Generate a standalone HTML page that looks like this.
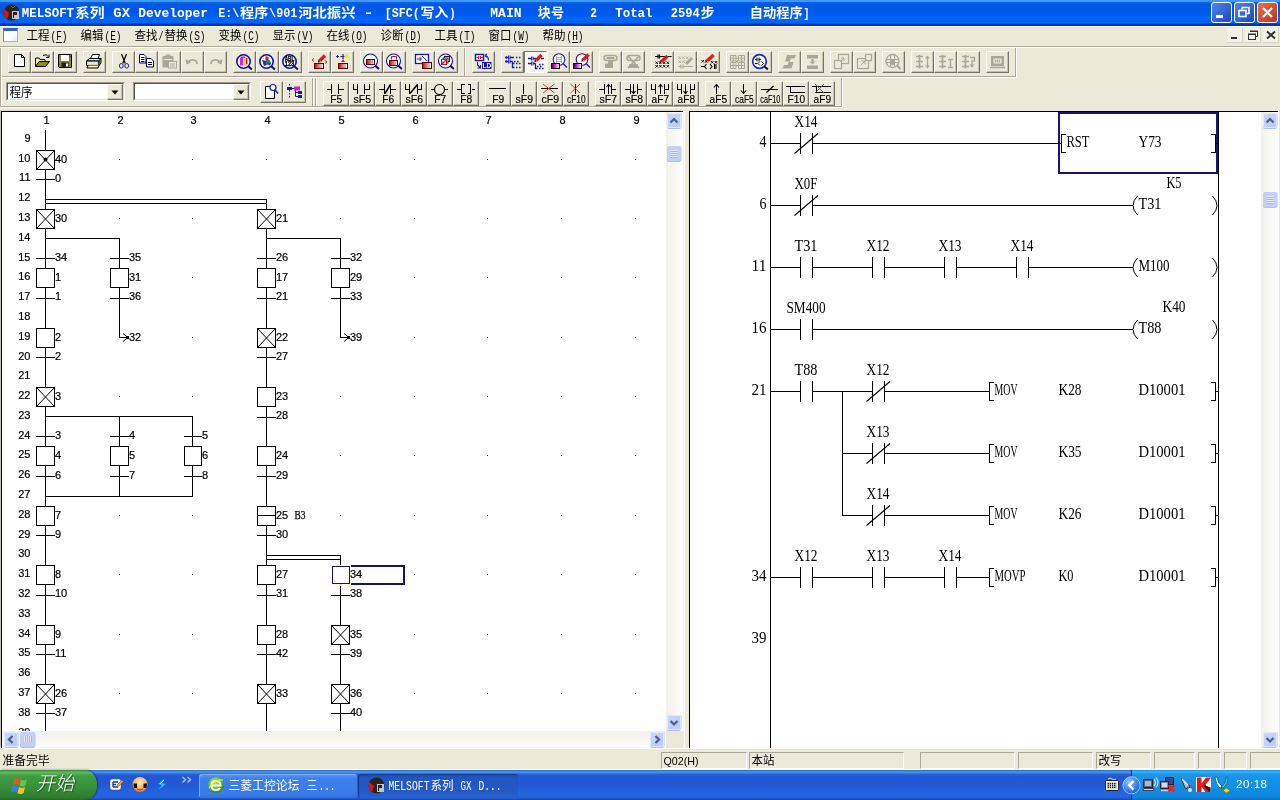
<!DOCTYPE html><html><head><meta charset="utf-8"><title>MELSOFT GX Developer</title><style>html,body{margin:0;padding:0}body{width:1280px;height:800px;position:relative;overflow:hidden;background:#ECE9D8;font-family:"Liberation Sans","Noto Sans CJK SC",sans-serif}svg{overflow:hidden;display:block}body>svg,body>div{will-change:transform}text{white-space:pre}</style></head><body><div style="position:absolute;left:0px;top:0px;width:1280px;height:26px;background:linear-gradient(to bottom,#3d98ff 0,#3d98ff 1.6px,#0b63e0 2.4px,#0456e2 5px,#0057e8 8px,#005aec 15px,#0066fa 18px,#0065f4 22.5px,#0048cc 23.5px,#0036b4 24.5px,#0036b4 26px)"></div><svg width="900" height="26" viewBox="0 0 900 26" style="position:absolute;left:0px;top:0px" ><text x="21.8" y="17" font-family='"Liberation Mono","DejaVu Sans Mono",monospace' font-size="13.5" font-weight="bold" fill="#fff" textLength="52.3" lengthAdjust="spacingAndGlyphs">MELSOFT</text><text x="74.9" y="17" font-family='"Liberation Sans","Noto Sans CJK SC",sans-serif' font-size="13" font-weight="bold" fill="#fff" textLength="29.6" lengthAdjust="spacingAndGlyphs">系列</text><text x="113.3" y="17" font-family='"Liberation Mono","DejaVu Sans Mono",monospace' font-size="13.5" font-weight="bold" fill="#fff" textLength="16.7" lengthAdjust="spacingAndGlyphs">GX</text><text x="138.3" y="17" font-family='"Liberation Mono","DejaVu Sans Mono",monospace' font-size="13.5" font-weight="bold" fill="#fff" textLength="69.7" lengthAdjust="spacingAndGlyphs">Developer</text><text x="218.3" y="17" font-family='"Liberation Mono","DejaVu Sans Mono",monospace' font-size="13.5" font-weight="bold" fill="#fff" textLength="21.0" lengthAdjust="spacingAndGlyphs">E:\</text><text x="240.1" y="17" font-family='"Liberation Sans","Noto Sans CJK SC",sans-serif' font-size="13" font-weight="bold" fill="#fff" textLength="28.3" lengthAdjust="spacingAndGlyphs">程序</text><text x="269.1" y="17" font-family='"Liberation Mono","DejaVu Sans Mono",monospace' font-size="13.5" font-weight="bold" fill="#fff" textLength="28.3" lengthAdjust="spacingAndGlyphs">\901</text><text x="298.2" y="17" font-family='"Liberation Sans","Noto Sans CJK SC",sans-serif' font-size="13" font-weight="bold" fill="#fff" textLength="57.3" lengthAdjust="spacingAndGlyphs">河北振兴</text><text x="363.3" y="17" font-family='"Liberation Mono","DejaVu Sans Mono",monospace' font-size="13.5" font-weight="bold" fill="#fff" textLength="10.7" lengthAdjust="spacingAndGlyphs">-</text><text x="384.8" y="17" font-family='"Liberation Mono","DejaVu Sans Mono",monospace' font-size="13.5" font-weight="bold" fill="#fff" textLength="35.0" lengthAdjust="spacingAndGlyphs">[SFC(</text><text x="420.6" y="17" font-family='"Liberation Sans","Noto Sans CJK SC",sans-serif' font-size="13" font-weight="bold" fill="#fff" textLength="27.8" lengthAdjust="spacingAndGlyphs">写入</text><text x="449.2" y="17" font-family='"Liberation Mono","DejaVu Sans Mono",monospace' font-size="13.5" font-weight="bold" fill="#fff" textLength="6.4" lengthAdjust="spacingAndGlyphs">)</text><text x="490.3" y="17" font-family='"Liberation Mono","DejaVu Sans Mono",monospace' font-size="13.5" font-weight="bold" fill="#fff" textLength="31.2" lengthAdjust="spacingAndGlyphs">MAIN</text><text x="537.8" y="17" font-family='"Liberation Sans","Noto Sans CJK SC",sans-serif' font-size="13" font-weight="bold" fill="#fff" textLength="26.2" lengthAdjust="spacingAndGlyphs">块号</text><text x="590.3" y="17" font-family='"Liberation Mono","DejaVu Sans Mono",monospace' font-size="13.5" font-weight="bold" fill="#fff" textLength="6.7" lengthAdjust="spacingAndGlyphs">2</text><text x="615.3" y="17" font-family='"Liberation Mono","DejaVu Sans Mono",monospace' font-size="13.5" font-weight="bold" fill="#fff" textLength="37.2" lengthAdjust="spacingAndGlyphs">Total</text><text x="670.8" y="17" font-family='"Liberation Mono","DejaVu Sans Mono",monospace' font-size="13.5" font-weight="bold" fill="#fff" textLength="28.9" lengthAdjust="spacingAndGlyphs">2594</text><text x="700.5" y="17" font-family='"Liberation Sans","Noto Sans CJK SC",sans-serif' font-size="13" font-weight="bold" fill="#fff" textLength="14.0" lengthAdjust="spacingAndGlyphs">步</text><text x="749.8" y="17" font-family='"Liberation Sans","Noto Sans CJK SC",sans-serif' font-size="13" font-weight="bold" fill="#fff" textLength="53.0" lengthAdjust="spacingAndGlyphs">自动程序</text><text x="803.6" y="17" font-family='"Liberation Mono","DejaVu Sans Mono",monospace' font-size="13.5" font-weight="bold" fill="#fff" textLength="5.9" lengthAdjust="spacingAndGlyphs">]</text></svg><svg width="17" height="17" viewBox="0 0 17 17" style="position:absolute;left:3px;top:4px" ><circle cx="8.5" cy="8.5" r="8" fill="#2a2322"/><path d="M1.5 5a8 8 0 0 0 2.5 10.5L6 9z" fill="#d01818"/><rect x="9" y="7" width="7" height="8" fill="#c9c4c0"/><path d="M10 8h4v3h-3v3h-1z" fill="#222"/><path d="M8 2l2 2 2-2" stroke="#3a8a3a" fill="none"/></svg><div style="position:absolute;left:1211px;top:2px;width:21px;height:21px;box-sizing:border-box;border:1px solid #fff;border-radius:3px;background:linear-gradient(135deg,#4f86ee,#1a48c0)"><svg width="19" height="19" viewBox="0 0 19 19" style="position:absolute;left:0;top:0"><rect x="4" y="12" width="7" height="3" fill="#fff"/></svg></div><div style="position:absolute;left:1234px;top:2px;width:21px;height:21px;box-sizing:border-box;border:1px solid #fff;border-radius:3px;background:linear-gradient(135deg,#4f86ee,#1a48c0)"><svg width="19" height="19" viewBox="0 0 19 19" style="position:absolute;left:0;top:0"><path d="M7 4.5h7v6h-2M7 4.5v2" stroke="#fff" stroke-width="1.6" fill="none"/><rect x="4" y="7.5" width="7" height="6" stroke="#fff" stroke-width="1.6" fill="none"/></svg></div><div style="position:absolute;left:1257px;top:2px;width:21px;height:21px;box-sizing:border-box;border:1px solid #fff;border-radius:3px;background:linear-gradient(135deg,#e8714f,#c03214)"><svg width="19" height="19" viewBox="0 0 19 19" style="position:absolute;left:0;top:0"><path d="M5 5l9 9M14 5l-9 9" stroke="#fff" stroke-width="2.2"/></svg></div><div style="position:absolute;left:0px;top:26px;width:1280px;height:20px;background:#ECE9D8"></div><div style="position:absolute;left:0px;top:26px;width:1280px;height:1px;background:#fbfbff"></div><div style="position:absolute;left:0px;top:46px;width:1280px;height:1px;background:#ACA899"></div><div style="position:absolute;left:0px;top:47px;width:1280px;height:1px;background:#fff"></div><div style="position:absolute;left:3px;top:28px;width:15px;height:14px;box-sizing:border-box;border:1px solid;border-color:#2f63c8 #9db4dc #9db4dc #5a82d0;border-top:3px solid #2f63c8;background:linear-gradient(135deg,#fff 55%,#e4ecfa)"></div><svg width="700" height="20" style="position:absolute;left:0px;top:26px" viewBox="0 26 700 20"><text x="26.5" y="40" font-family='"Liberation Sans","Noto Sans CJK SC",sans-serif' font-size="12" font-weight="normal" fill="#000" textLength="23.0" lengthAdjust="spacingAndGlyphs" >工程</text><text x="50.5" y="40" font-family='"Liberation Mono","DejaVu Sans Mono",monospace' font-size="12" font-weight="normal" fill="#000" textLength="17.0" lengthAdjust="spacingAndGlyphs" >(F)</text><rect x="56" y="42" width="6" height="1" fill="#000"/><text x="80.5" y="40" font-family='"Liberation Sans","Noto Sans CJK SC",sans-serif' font-size="12" font-weight="normal" fill="#000" textLength="23.0" lengthAdjust="spacingAndGlyphs" >编辑</text><text x="104.5" y="40" font-family='"Liberation Mono","DejaVu Sans Mono",monospace' font-size="12" font-weight="normal" fill="#000" textLength="17.0" lengthAdjust="spacingAndGlyphs" >(E)</text><rect x="110" y="42" width="6" height="1" fill="#000"/><text x="134.5" y="40" font-family='"Liberation Sans","Noto Sans CJK SC",sans-serif' font-size="12" font-weight="normal" fill="#000" textLength="23.0" lengthAdjust="spacingAndGlyphs" >查找</text><text x="158.5" y="40" font-family='"Liberation Mono","DejaVu Sans Mono",monospace' font-size="12" font-weight="normal" fill="#000" textLength="5.0" lengthAdjust="spacingAndGlyphs" >/</text><text x="164.5" y="40" font-family='"Liberation Sans","Noto Sans CJK SC",sans-serif' font-size="12" font-weight="normal" fill="#000" textLength="23.0" lengthAdjust="spacingAndGlyphs" >替换</text><text x="188.5" y="40" font-family='"Liberation Mono","DejaVu Sans Mono",monospace' font-size="12" font-weight="normal" fill="#000" textLength="17.0" lengthAdjust="spacingAndGlyphs" >(S)</text><rect x="194" y="42" width="6" height="1" fill="#000"/><text x="218.5" y="40" font-family='"Liberation Sans","Noto Sans CJK SC",sans-serif' font-size="12" font-weight="normal" fill="#000" textLength="23.0" lengthAdjust="spacingAndGlyphs" >变换</text><text x="242.5" y="40" font-family='"Liberation Mono","DejaVu Sans Mono",monospace' font-size="12" font-weight="normal" fill="#000" textLength="17.0" lengthAdjust="spacingAndGlyphs" >(C)</text><rect x="248" y="42" width="6" height="1" fill="#000"/><text x="272.5" y="40" font-family='"Liberation Sans","Noto Sans CJK SC",sans-serif' font-size="12" font-weight="normal" fill="#000" textLength="23.0" lengthAdjust="spacingAndGlyphs" >显示</text><text x="296.5" y="40" font-family='"Liberation Mono","DejaVu Sans Mono",monospace' font-size="12" font-weight="normal" fill="#000" textLength="17.0" lengthAdjust="spacingAndGlyphs" >(V)</text><rect x="302" y="42" width="6" height="1" fill="#000"/><text x="326.5" y="40" font-family='"Liberation Sans","Noto Sans CJK SC",sans-serif' font-size="12" font-weight="normal" fill="#000" textLength="23.0" lengthAdjust="spacingAndGlyphs" >在线</text><text x="350.5" y="40" font-family='"Liberation Mono","DejaVu Sans Mono",monospace' font-size="12" font-weight="normal" fill="#000" textLength="17.0" lengthAdjust="spacingAndGlyphs" >(O)</text><rect x="356" y="42" width="6" height="1" fill="#000"/><text x="380.5" y="40" font-family='"Liberation Sans","Noto Sans CJK SC",sans-serif' font-size="12" font-weight="normal" fill="#000" textLength="23.0" lengthAdjust="spacingAndGlyphs" >诊断</text><text x="404.5" y="40" font-family='"Liberation Mono","DejaVu Sans Mono",monospace' font-size="12" font-weight="normal" fill="#000" textLength="17.0" lengthAdjust="spacingAndGlyphs" >(D)</text><rect x="410" y="42" width="6" height="1" fill="#000"/><text x="434.5" y="40" font-family='"Liberation Sans","Noto Sans CJK SC",sans-serif' font-size="12" font-weight="normal" fill="#000" textLength="23.0" lengthAdjust="spacingAndGlyphs" >工具</text><text x="458.5" y="40" font-family='"Liberation Mono","DejaVu Sans Mono",monospace' font-size="12" font-weight="normal" fill="#000" textLength="17.0" lengthAdjust="spacingAndGlyphs" >(T)</text><rect x="464" y="42" width="6" height="1" fill="#000"/><text x="488.5" y="40" font-family='"Liberation Sans","Noto Sans CJK SC",sans-serif' font-size="12" font-weight="normal" fill="#000" textLength="23.0" lengthAdjust="spacingAndGlyphs" >窗口</text><text x="512.5" y="40" font-family='"Liberation Mono","DejaVu Sans Mono",monospace' font-size="12" font-weight="normal" fill="#000" textLength="17.0" lengthAdjust="spacingAndGlyphs" >(W)</text><rect x="518" y="42" width="6" height="1" fill="#000"/><text x="542.5" y="40" font-family='"Liberation Sans","Noto Sans CJK SC",sans-serif' font-size="12" font-weight="normal" fill="#000" textLength="23.0" lengthAdjust="spacingAndGlyphs" >帮助</text><text x="566.5" y="40" font-family='"Liberation Mono","DejaVu Sans Mono",monospace' font-size="12" font-weight="normal" fill="#000" textLength="17.0" lengthAdjust="spacingAndGlyphs" >(H)</text><rect x="572" y="42" width="6" height="1" fill="#000"/></svg><div style="position:absolute;left:1227px;top:28px;width:16px;height:15px;background:#f3f1e8;box-sizing:border-box;border-right:1px solid #d8d4c4;border-bottom:1px solid #d8d4c4"><svg width="16" height="15" style="position:absolute;left:0;top:0"><rect x="4" y="9" width="6" height="2" fill="#333"/></svg></div><div style="position:absolute;left:1245px;top:28px;width:16px;height:15px;background:#f3f1e8;box-sizing:border-box;border-right:1px solid #d8d4c4;border-bottom:1px solid #d8d4c4"><svg width="16" height="15" style="position:absolute;left:0;top:0"><path d="M5.5 3.5h7v5h-2" stroke="#333" stroke-width="1" fill="none"/><rect x="5" y="2.5" width="8" height="1.5" fill="#333"/><rect x="3.5" y="6.5" width="7" height="5" stroke="#333" fill="none"/><rect x="3" y="5.5" width="8" height="1.5" fill="#333"/></svg></div><div style="position:absolute;left:1263px;top:28px;width:16px;height:15px;background:#f3f1e8;box-sizing:border-box;border-right:1px solid #d8d4c4;border-bottom:1px solid #d8d4c4"><svg width="16" height="15" style="position:absolute;left:0;top:0"><path d="M4 3.5l8 7M12 3.5l-8 7" stroke="#333" stroke-width="2"/></svg></div><div style="position:absolute;left:0px;top:48px;width:1280px;height:63px;background:#ECE9D8"></div><div style="position:absolute;left:0px;top:76px;width:1016px;height:1px;background:#ACA899"></div><div style="position:absolute;left:0px;top:77px;width:1017px;height:1px;background:#fff"></div><div style="position:absolute;left:0px;top:106px;width:842px;height:1px;background:#ACA899"></div><div style="position:absolute;left:0px;top:107px;width:843px;height:1px;background:#fff"></div><div style="position:absolute;left:0px;top:48px;width:1px;height:58px;background:#ACA899"></div><div style="position:absolute;left:1px;top:48px;width:1px;height:58px;background:#fff"></div><div style="position:absolute;left:464px;top:48px;width:1px;height:28px;background:#ACA899"></div><div style="position:absolute;left:465px;top:48px;width:1px;height:28px;background:#fff"></div><div style="position:absolute;left:1015px;top:48px;width:1px;height:29px;background:#ACA899"></div><div style="position:absolute;left:1016px;top:48px;width:1px;height:30px;background:#fff"></div><div style="position:absolute;left:312px;top:78px;width:1px;height:28px;background:#ACA899"></div><div style="position:absolute;left:313px;top:78px;width:1px;height:28px;background:#fff"></div><div style="position:absolute;left:315px;top:78px;width:1px;height:28px;background:#ACA899"></div><div style="position:absolute;left:316px;top:78px;width:1px;height:28px;background:#fff"></div><div style="position:absolute;left:841px;top:78px;width:1px;height:29px;background:#ACA899"></div><div style="position:absolute;left:842px;top:78px;width:1px;height:30px;background:#fff"></div><div style="position:absolute;left:8px;top:51px;width:23px;height:22px;box-sizing:border-box;border:1px solid;border-color:#fdfdf8 #76736a #76736a #fdfdf8;background:#ECE9D8;box-shadow:inset -1px -1px 0 #c4c1b2"><svg width="23" height="22" viewBox="0 0 23 22" style="position:absolute;left:-1px;top:-1px"><path d="M6.500 3.500h7l3 3v9h-10z" fill="#fff" stroke="#000"/><path d="M13.500 3.500v3h3" fill="none" stroke="#000"/></svg></div><div style="position:absolute;left:31px;top:51px;width:23px;height:22px;box-sizing:border-box;border:1px solid;border-color:#fdfdf8 #76736a #76736a #fdfdf8;background:#ECE9D8;box-shadow:inset -1px -1px 0 #c4c1b2"><svg width="23" height="22" viewBox="0 0 23 22" style="position:absolute;left:-1px;top:-1px"><path d="M4.500 15.500v-8.500h3.500l1 1.500h5v2" fill="#f6f28c" stroke="#000"/><path d="M4.500 15.500l3.500-5h10.500l-4 5z" fill="#8c8c22" stroke="#000"/><path d="M12 4.500q3.500-2.200 5.500 1.300" fill="none" stroke="#000"/><path d="M18 3.500v3h-3" fill="none" stroke="#000"/></svg></div><div style="position:absolute;left:54px;top:51px;width:23px;height:22px;box-sizing:border-box;border:1px solid;border-color:#fdfdf8 #76736a #76736a #fdfdf8;background:#ECE9D8;box-shadow:inset -1px -1px 0 #c4c1b2"><svg width="23" height="22" viewBox="0 0 23 22" style="position:absolute;left:-1px;top:-1px"><path d="M4.500 3.500h13v13h-12l-1-1z" fill="#86863c" stroke="#000"/><rect x="7" y="4" width="8" height="6" fill="#fff"/><rect x="7.500" y="11.500" width="7" height="5" fill="#222"/><rect x="12" y="12.500" width="2" height="3" fill="#fff"/><rect x="15.500" y="4.500" width="1" height="2" fill="#222"/></svg></div><div style="position:absolute;left:83px;top:51px;width:23px;height:22px;box-sizing:border-box;border:1px solid;border-color:#fdfdf8 #76736a #76736a #fdfdf8;background:#ECE9D8;box-shadow:inset -1px -1px 0 #c4c1b2"><svg width="23" height="22" viewBox="0 0 23 22" style="position:absolute;left:-1px;top:-1px"><path d="M7.500 7.500l2-4h7l-1.500 4z" fill="#fff" stroke="#000"/><path d="M3.500 10l3-2.500h11.500l-2 2.500z" fill="#e8e6da" stroke="#000"/><path d="M3.500 10h12.500v4.500h-12.500z" fill="#d4d1c2" stroke="#000"/><path d="M16 10l2-2.500v4.500l-2 2.500z" fill="#a8a596" stroke="#000"/><path d="M5 14.500l-1 2.500h11l1-2.500" fill="#f6f2a0" stroke="#000"/><path d="M5 12h9" stroke="#fff"/><circle cx="17" cy="10" r=".8" fill="#0a0"/></svg></div><div style="position:absolute;left:112px;top:51px;width:23px;height:22px;box-sizing:border-box;border:1px solid;border-color:#fdfdf8 #76736a #76736a #fdfdf8;background:#ECE9D8;box-shadow:inset -1px -1px 0 #c4c1b2"><svg width="23" height="22" viewBox="0 0 23 22" style="position:absolute;left:-1px;top:-1px"><path d="M9.500 3l3.800 9.500M14.500 3l-3.800 9.500" stroke="#000" stroke-width="1.200" fill="none"/><ellipse cx="9.300" cy="14.800" rx="1.900" ry="2.300" fill="none" stroke="#1a1a90" stroke-width="1"/><ellipse cx="14.700" cy="14.800" rx="1.900" ry="2.300" fill="none" stroke="#1a1a90" stroke-width="1"/></svg></div><div style="position:absolute;left:135px;top:51px;width:23px;height:22px;box-sizing:border-box;border:1px solid;border-color:#fdfdf8 #76736a #76736a #fdfdf8;background:#ECE9D8;box-shadow:inset -1px -1px 0 #c4c1b2"><svg width="23" height="22" viewBox="0 0 23 22" style="position:absolute;left:-1px;top:-1px"><path d="M4.500 3.500h4.500l2 2v6.500h-6.500z" fill="#fff" stroke="#000060"/><path d="M6 6.500h3.500M6 8.500h3.500M6 10.500h3.500" stroke="#000"/><path d="M11.500 7.500h4.500l2.500 2.500v6h-7z" fill="#fff" stroke="#000060"/><path d="M13 11.500h4M13 13.500h4" stroke="#000"/></svg></div><div style="position:absolute;left:158px;top:51px;width:23px;height:22px;box-sizing:border-box;border:1px solid;border-color:#fdfdf8 #76736a #76736a #fdfdf8;background:#ECE9D8;box-shadow:inset -1px -1px 0 #c4c1b2"><svg width="23" height="22" viewBox="0 0 23 22" style="position:absolute;left:-1px;top:-1px"><rect x="4.500" y="5" width="11" height="11.500" rx="1" fill="#aaa798"/><rect x="7.500" y="3.500" width="5" height="3" rx="1" fill="#aaa798"/><rect x="10.500" y="10.500" width="8" height="6.500" fill="#ECE9D8" stroke="#aaa798"/><path d="M12 13h5M12 15h5" stroke="#aaa798"/><path d="M6 8.500h8" stroke="#ECE9D8"/></svg></div><div style="position:absolute;left:181px;top:51px;width:23px;height:22px;box-sizing:border-box;border:1px solid;border-color:#fdfdf8 #76736a #76736a #fdfdf8;background:#ECE9D8;box-shadow:inset -1px -1px 0 #c4c1b2"><svg width="23" height="22" viewBox="0 0 23 22" style="position:absolute;left:-1px;top:-1px"><path d="M7 12.500q1-4 5.500-3.500q3.500 .6 3.500 4" fill="none" stroke="#aaa798" stroke-width="1.700"/><path d="M4.500 8l1 5.500 4.500-2z" fill="#aaa798"/></svg></div><div style="position:absolute;left:204px;top:51px;width:23px;height:22px;box-sizing:border-box;border:1px solid;border-color:#fdfdf8 #76736a #76736a #fdfdf8;background:#ECE9D8;box-shadow:inset -1px -1px 0 #c4c1b2"><svg width="23" height="22" viewBox="0 0 23 22" style="position:absolute;left:-1px;top:-1px"><path d="M16 12.500q-1-4-5.500-3.500q-3.500 .6-3.500 4" fill="none" stroke="#aaa798" stroke-width="1.700"/><path d="M18.500 8l-1 5.500-4.500-2z" fill="#aaa798"/></svg></div><div style="position:absolute;left:233px;top:51px;width:23px;height:22px;box-sizing:border-box;border:1px solid;border-color:#fdfdf8 #76736a #76736a #fdfdf8;background:#ECE9D8;box-shadow:inset -1px -1px 0 #c4c1b2"><svg width="23" height="22" viewBox="0 0 23 22" style="position:absolute;left:-1px;top:-1px"><circle cx="10.5" cy="10.5" r="6.7" fill="#fff" stroke="#1010b4" stroke-width="1.6"/><path d="M7 6.500h3v8h-3z" fill="#e020e0"/><path d="M10 5.500h3v9.500h-3z" fill="#f4e020"/><path d="M13 7h1.500v6.500h-1.500z" fill="#d02020"/><path d="M8 5.500h4v1.500h-4z" fill="#8a40c0"/><path d="M15.3 15.3l3.600 3.200" stroke="#101060" stroke-width="2"/></svg></div><div style="position:absolute;left:256px;top:51px;width:23px;height:22px;box-sizing:border-box;border:1px solid;border-color:#fdfdf8 #76736a #76736a #fdfdf8;background:#ECE9D8;box-shadow:inset -1px -1px 0 #c4c1b2"><svg width="23" height="22" viewBox="0 0 23 22" style="position:absolute;left:-1px;top:-1px"><circle cx="10.5" cy="10.5" r="6.7" fill="#fff" stroke="#1010b4" stroke-width="1.6"/><path d="M9.500 5l3 1v3l-3 1z" fill="#e01818"/><path d="M6 9l4 1 1 4-3 1z" fill="#5020a0"/><path d="M10 9h3.500l1.500 3-3 2.500-2-2.500z" fill="#108080"/><path d="M12 12l3 0-1 3z" fill="#a01020"/><path d="M15.3 15.3l3.600 3.200" stroke="#101060" stroke-width="2"/></svg></div><div style="position:absolute;left:279px;top:51px;width:23px;height:22px;box-sizing:border-box;border:1px solid;border-color:#fdfdf8 #76736a #76736a #fdfdf8;background:#ECE9D8;box-shadow:inset -1px -1px 0 #c4c1b2"><svg width="23" height="22" viewBox="0 0 23 22" style="position:absolute;left:-1px;top:-1px"><circle cx="10.5" cy="10.5" r="6.7" fill="#fff" stroke="#1010b4" stroke-width="1.6"/><text x="10.500" y="10" font-size="6.500" font-family="Liberation Sans" font-weight="bold" stroke="#000" stroke-width=".3" text-anchor="middle" textLength="9.500" lengthAdjust="spacingAndGlyphs">ABL</text><text x="10.500" y="15.300" font-size="6.500" font-family="Liberation Sans" font-weight="bold" stroke="#000" stroke-width=".3" text-anchor="middle" textLength="9.500" lengthAdjust="spacingAndGlyphs">123</text><path d="M15.3 15.3l3.600 3.200" stroke="#101060" stroke-width="2"/></svg></div><div style="position:absolute;left:308px;top:51px;width:23px;height:22px;box-sizing:border-box;border:1px solid;border-color:#fdfdf8 #76736a #76736a #fdfdf8;background:#ECE9D8;box-shadow:inset -1px -1px 0 #c4c1b2"><svg width="23" height="22" viewBox="0 0 23 22" style="position:absolute;left:-1px;top:-1px"><path d="M11 10.5L17 4.5" stroke="#e01818" stroke-width="3.4" stroke-linecap="butt"/><path d="M9.8 11.7l2.400-.6-1.800-1.800z" fill="#111"/><path d="M11.8 10.3l1.200 1.200" stroke="#f0d060" stroke-width="1.2"/><defs><linearGradient id="pg612" x1="0" x2="1" y1="0" y2="0"><stop offset="0" stop-color="#b01010"/><stop offset=".3" stop-color="#e04848"/><stop offset=".6" stop-color="#f4c0c0"/><stop offset="1" stop-color="#fff"/></linearGradient></defs><rect x="6.5" y="12.5" width="9" height="5" fill="url(#pg612)" stroke="#600" stroke-width="1"/><path d="M10.95 13v4M13.02 13v4" stroke="#777" stroke-width=".7"/><path d="M6 7.500l-2 1.500 2 1.500M17 9.500l2 1.500-2 1.500" stroke="#c01010" fill="none" stroke-width=".9"/></svg></div><div style="position:absolute;left:331px;top:51px;width:23px;height:22px;box-sizing:border-box;border:1px solid;border-color:#fdfdf8 #76736a #76736a #fdfdf8;background:#ECE9D8;box-shadow:inset -1px -1px 0 #c4c1b2"><svg width="23" height="22" viewBox="0 0 23 22" style="position:absolute;left:-1px;top:-1px"><path d="M12 3v5M9.500 5.500h5" stroke="#1818c0" stroke-width="1.200"/><path d="M6.500 4v3M5 5.500h3" stroke="#1818c0" stroke-width=".9"/><path d="M15 3l3 2-2 3-3-2z" fill="#f8e820"/><path d="M10 11l2-3 2 3z" fill="#e01818"/><defs><linearGradient id="pg712" x1="0" x2="1" y1="0" y2="0"><stop offset="0" stop-color="#b01010"/><stop offset=".3" stop-color="#e04848"/><stop offset=".6" stop-color="#f4c0c0"/><stop offset="1" stop-color="#fff"/></linearGradient></defs><rect x="7.5" y="12.5" width="9" height="5" fill="url(#pg712)" stroke="#600" stroke-width="1"/><path d="M11.95 13v4M14.02 13v4" stroke="#777" stroke-width=".7"/></svg></div><div style="position:absolute;left:360px;top:51px;width:23px;height:22px;box-sizing:border-box;border:1px solid;border-color:#fdfdf8 #76736a #76736a #fdfdf8;background:#ECE9D8;box-shadow:inset -1px -1px 0 #c4c1b2"><svg width="23" height="22" viewBox="0 0 23 22" style="position:absolute;left:-1px;top:-1px"><circle cx="10.5" cy="10" r="7" fill="#fff" stroke="#1010b4" stroke-width="1.1"/><defs><linearGradient id="pg68" x1="0" x2="1" y1="0" y2="0"><stop offset="0" stop-color="#b01010"/><stop offset=".3" stop-color="#e04848"/><stop offset=".6" stop-color="#f4c0c0"/><stop offset="1" stop-color="#fff"/></linearGradient></defs><rect x="6.5" y="8.5" width="8" height="5" fill="url(#pg68)" stroke="#600" stroke-width="1"/><path d="M10.4 9v4M12.24 9v4" stroke="#777" stroke-width=".7"/><path d="M15.3 14.8l3.600 3.200" stroke="#101060" stroke-width="2"/></svg></div><div style="position:absolute;left:383px;top:51px;width:23px;height:22px;box-sizing:border-box;border:1px solid;border-color:#fdfdf8 #76736a #76736a #fdfdf8;background:#ECE9D8;box-shadow:inset -1px -1px 0 #c4c1b2"><svg width="23" height="22" viewBox="0 0 23 22" style="position:absolute;left:-1px;top:-1px"><circle cx="10.5" cy="10" r="7" fill="#fff" stroke="#1010b4" stroke-width="1.1"/><defs><linearGradient id="pg69" x1="0" x2="1" y1="0" y2="0"><stop offset="0" stop-color="#b01010"/><stop offset=".3" stop-color="#e04848"/><stop offset=".6" stop-color="#f4c0c0"/><stop offset="1" stop-color="#fff"/></linearGradient></defs><rect x="6.5" y="9.5" width="8" height="5" fill="url(#pg69)" stroke="#600" stroke-width="1"/><path d="M10.4 10v4M12.24 10v4" stroke="#777" stroke-width=".7"/><path d="M8.500 8.500v-3h5v3" fill="#fff" stroke="#c01010"/><path d="M15.3 14.8l3.600 3.200" stroke="#101060" stroke-width="2"/></svg></div><div style="position:absolute;left:412px;top:51px;width:23px;height:22px;box-sizing:border-box;border:1px solid;border-color:#fdfdf8 #76736a #76736a #fdfdf8;background:#ECE9D8;box-shadow:inset -1px -1px 0 #c4c1b2"><svg width="23" height="22" viewBox="0 0 23 22" style="position:absolute;left:-1px;top:-1px"><rect x="3.500" y="3.500" width="13" height="9" fill="#fff" stroke="#1818a8" stroke-width="1.300"/><path d="M5 8h4M7.500 6l2 2-2 2M10 5l5 5" stroke="#1818a8" fill="none"/><defs><linearGradient id="pg1011" x1="0" x2="1" y1="0" y2="0"><stop offset="0" stop-color="#b01010"/><stop offset=".3" stop-color="#e04848"/><stop offset=".6" stop-color="#f4c0c0"/><stop offset="1" stop-color="#fff"/></linearGradient></defs><rect x="10.5" y="11.5" width="9" height="6" fill="url(#pg1011)" stroke="#600" stroke-width="1"/><path d="M14.95 12v5M17.02 12v5" stroke="#777" stroke-width=".7"/></svg></div><div style="position:absolute;left:435px;top:51px;width:23px;height:22px;box-sizing:border-box;border:1px solid;border-color:#fdfdf8 #76736a #76736a #fdfdf8;background:#ECE9D8;box-shadow:inset -1px -1px 0 #c4c1b2"><svg width="23" height="22" viewBox="0 0 23 22" style="position:absolute;left:-1px;top:-1px"><circle cx="10.5" cy="10" r="7" fill="#fff" stroke="#1010b4" stroke-width="1.1"/><rect x="9.500" y="5.500" width="5" height="5" fill="#fff" stroke="#222"/><rect x="8" y="7" width="5" height="5" fill="#fff" stroke="#222"/><rect x="6.500" y="8.500" width="5" height="5" fill="#fff" stroke="#c01010"/><path d="M7 13l4-4M7.500 10.500l1.500 2" stroke="#d02020" stroke-width="1.100" fill="none"/><path d="M15.3 14.8l3.600 3.200" stroke="#101060" stroke-width="2"/></svg></div><div style="position:absolute;left:472px;top:51px;width:23px;height:22px;box-sizing:border-box;border:1px solid;border-color:#fdfdf8 #76736a #76736a #fdfdf8;background:#ECE9D8;box-shadow:inset -1px -1px 0 #c4c1b2"><svg width="23" height="22" viewBox="0 0 23 22" style="position:absolute;left:-1px;top:-1px"><rect x="3.500" y="3.500" width="8" height="6" fill="#fff" stroke="#1818a8" stroke-width="1.400"/><path d="M4.500 6.500h2M8.500 6.500h2.500M6.500 5v3M8.500 5v3" stroke="#d02020" stroke-width="1.200"/><path d="M13 4.500q3.500 .5 3.500 5M13 4.500l1.800 1.800M13 4.500l1.800-1.500" stroke="#1818a8" fill="none" stroke-width="1.100"/><path d="M5.500 11v3l3 3M8.500 14v3h-3" stroke="#1818a8" fill="none" stroke-width="1.100"/><rect x="10" y="11" width="9.500" height="7" fill="#1010a0"/><text x="14.800" y="17" font-size="6.500" font-weight="bold" font-family="Liberation Sans" fill="#fff" text-anchor="middle">LD</text></svg></div><div style="position:absolute;left:501px;top:51px;width:23px;height:22px;box-sizing:border-box;border:1px solid;border-color:#fdfdf8 #76736a #76736a #fdfdf8;background:#ECE9D8;box-shadow:inset -1px -1px 0 #c4c1b2"><svg width="23" height="22" viewBox="0 0 23 22" style="position:absolute;left:-1px;top:-1px"><path d="M4 6.500h3M9 6.500h4M15 6.500h1.500M18 6.500h1.500M4 10.500h3M9 10.500h2.500M11.500 10.500v6h2M11.500 12.500h2M15 12.500h1.500M18 12.500h1.500M15 16.500h1.500M18 16.500h1.500M13 10.500h1.500M16 10.500h1.500" stroke="#1818a8" stroke-width="1.300" fill="none"/><path d="M6 5l-2 1.500 2 1.500zM6 9l-2 1.500 2 1.500z" fill="#1818a8"/><path d="M7.500 4.500v4M9 4.500v4M7.500 8.500v4M9 8.500v4" stroke="#1818a8" stroke-width=".9"/></svg></div><div style="position:absolute;left:524px;top:51px;width:23px;height:22px;box-sizing:border-box;border:1px solid;border-color:#76736a #fff #fff #76736a;background:#f8f7f1"><svg width="23" height="22" viewBox="0 0 23 22" style="position:absolute;left:-1px;top:-1px"><path d="M4 7.500h3M9 7.500h3M4 12.500h3M9 12.500h2.500M11.500 12.500v5h2M15 13.500h1.500M18 13.500h1.500M15 17.500h1.500M18 17.500h1.500M13 15.500h1.500M16 15.500h1.500M17 7.500h3" stroke="#1818a8" stroke-width="1.300" fill="none"/><path d="M7.500 5.500v4M9 5.500v4M7.500 10.500v4M9 10.500v4" stroke="#1818a8" stroke-width=".9"/><path d="M11.5 10L17.5 4" stroke="#e01818" stroke-width="3.4" stroke-linecap="butt"/><path d="M10.3 11.2l2.400-.6-1.800-1.800z" fill="#111"/><path d="M12.3 9.8l1.200 1.200" stroke="#f0d060" stroke-width="1.2"/></svg></div><div style="position:absolute;left:547px;top:51px;width:23px;height:22px;box-sizing:border-box;border:1px solid;border-color:#fdfdf8 #76736a #76736a #fdfdf8;background:#ECE9D8;box-shadow:inset -1px -1px 0 #c4c1b2"><svg width="23" height="22" viewBox="0 0 23 22" style="position:absolute;left:-1px;top:-1px"><circle cx="12" cy="8.500" r="5.800" fill="#fff" stroke="#1818a8" stroke-width="1.100"/><path d="M9.500 6.500h5M9.500 8.500h5M9.500 10.500h5M9.500 5v7M14.500 5v7" stroke="#888" stroke-width=".7" fill="none"/><path d="M16 12.500l4 4" stroke="#1818a8" stroke-width="1.300"/><defs><linearGradient id="mg412" x1="0" x2="1" y1="0" y2="0"><stop offset="0" stop-color="#400040"/><stop offset=".4" stop-color="#d020d0"/><stop offset="1" stop-color="#fff"/></linearGradient></defs><rect x="4.5" y="12.5" width="8" height="5" fill="url(#mg412)" stroke="#000" stroke-width="1"/></svg></div><div style="position:absolute;left:570px;top:51px;width:23px;height:22px;box-sizing:border-box;border:1px solid;border-color:#fdfdf8 #76736a #76736a #fdfdf8;background:#ECE9D8;box-shadow:inset -1px -1px 0 #c4c1b2"><svg width="23" height="22" viewBox="0 0 23 22" style="position:absolute;left:-1px;top:-1px"><circle cx="12" cy="8.500" r="5.800" fill="#fff" stroke="#1818a8" stroke-width="1.100"/><path d="M16 12.500l4 4" stroke="#1818a8" stroke-width="1.300"/><path d="M12.5 9.5L18.5 3.5" stroke="#e01818" stroke-width="3.4" stroke-linecap="butt"/><path d="M11.3 10.7l2.400-.6-1.800-1.800z" fill="#111"/><path d="M13.3 9.3l1.200 1.200" stroke="#f0d060" stroke-width="1.2"/><defs><linearGradient id="mg312" x1="0" x2="1" y1="0" y2="0"><stop offset="0" stop-color="#400040"/><stop offset=".4" stop-color="#d020d0"/><stop offset="1" stop-color="#fff"/></linearGradient></defs><rect x="3.5" y="12.5" width="8" height="5" fill="url(#mg312)" stroke="#000" stroke-width="1"/></svg></div><div style="position:absolute;left:599px;top:51px;width:23px;height:22px;box-sizing:border-box;border:1px solid;border-color:#fdfdf8 #76736a #76736a #fdfdf8;background:#ECE9D8;box-shadow:inset -1px -1px 0 #c4c1b2"><svg width="23" height="22" viewBox="0 0 23 22" style="position:absolute;left:-1px;top:-1px"><rect x="5" y="4.500" width="13" height="5" rx="2.500" fill="none" stroke="#aaa798" stroke-width="1.500"/><rect x="7.500" y="6" width="8" height="2" fill="#aaa798"/><rect x="9" y="9" width="5" height="8" fill="#aaa798"/><rect x="6" y="12.500" width="5" height="4.500" fill="#aaa798"/></svg></div><div style="position:absolute;left:622px;top:51px;width:23px;height:22px;box-sizing:border-box;border:1px solid;border-color:#fdfdf8 #76736a #76736a #fdfdf8;background:#ECE9D8;box-shadow:inset -1px -1px 0 #c4c1b2"><svg width="23" height="22" viewBox="0 0 23 22" style="position:absolute;left:-1px;top:-1px"><rect x="5" y="4.500" width="13" height="5" rx="2.500" fill="none" stroke="#aaa798" stroke-width="1.500"/><path d="M6 5l11 12M17 5l-11 12" stroke="#aaa798" stroke-width="1.600"/><rect x="7" y="13" width="9" height="4" fill="#aaa798"/></svg></div><div style="position:absolute;left:651px;top:51px;width:23px;height:22px;box-sizing:border-box;border:1px solid;border-color:#fdfdf8 #76736a #76736a #fdfdf8;background:#ECE9D8;box-shadow:inset -1px -1px 0 #c4c1b2"><svg width="23" height="22" viewBox="0 0 23 22" style="position:absolute;left:-1px;top:-1px"><path d="M4 5.500h3M8.500 5.500h12M7 3.500v4M8.500 3.500v4" stroke="#000" stroke-width="1.200"/><path d="M4.5 10.5l2.500 2.500M7.0 10.5l-2.500 2.500M8.2 10.5l2.500 2.500M10.7 10.5l-2.500 2.500M11.9 10.5l2.500 2.500M14.4 10.5l-2.500 2.500M15.600000000000001 10.5l2.500 2.500M18.1 10.5l-2.500 2.500" stroke="#000" stroke-width="0.9" fill="none"/><path d="M4.5 14l2.500 2.500M7.0 14l-2.500 2.500M8.2 14l2.500 2.500M10.7 14l-2.500 2.500M11.9 14l2.500 2.500M14.4 14l-2.500 2.500M15.600000000000001 14l2.500 2.500M18.1 14l-2.500 2.500" stroke="#000" stroke-width="0.9" fill="none"/><path d="M9.5 11.5L16.5 5" stroke="#e01818" stroke-width="3.4" stroke-linecap="butt"/><path d="M8.3 12.7l2.400-.6-1.800-1.800z" fill="#111"/><path d="M10.3 11.3l1.200 1.200" stroke="#f0d060" stroke-width="1.2"/></svg></div><div style="position:absolute;left:674px;top:51px;width:23px;height:22px;box-sizing:border-box;border:1px solid;border-color:#fdfdf8 #76736a #76736a #fdfdf8;background:#ECE9D8;box-shadow:inset -1px -1px 0 #c4c1b2"><svg width="23" height="22" viewBox="0 0 23 22" style="position:absolute;left:-1px;top:-1px"><path d="M4 15.500h3M9 15.500h10M7 13.500v4M9 13.500v4" stroke="#aaa798" stroke-width="1.100"/><path d="M4.5 5.5l2.500 2.500M7.0 5.5l-2.500 2.500M8.2 5.5l2.500 2.500M10.7 5.5l-2.500 2.500M11.9 5.5l2.500 2.500M14.4 5.5l-2.500 2.500" stroke="#aaa798" stroke-width="0.9" fill="none"/><path d="M4.5 9.5l2.500 2.500M7.0 9.5l-2.500 2.500M8.2 9.5l2.500 2.500M10.7 9.5l-2.500 2.500M11.9 9.5l2.500 2.500M14.4 9.5l-2.500 2.500" stroke="#aaa798" stroke-width="0.9" fill="none"/><path d="M11 12l6-6 2 2-6 6z" fill="#aaa798"/></svg></div><div style="position:absolute;left:697px;top:51px;width:23px;height:22px;box-sizing:border-box;border:1px solid;border-color:#fdfdf8 #76736a #76736a #fdfdf8;background:#ECE9D8;box-shadow:inset -1px -1px 0 #c4c1b2"><svg width="23" height="22" viewBox="0 0 23 22" style="position:absolute;left:-1px;top:-1px"><path d="M4.5 9l2.500 2.500M7.0 9l-2.500 2.500M8.2 9l2.500 2.500M10.7 9l-2.500 2.500" stroke="#000" stroke-width="0.9" fill="none"/><path d="M14.0 10l2.500 2.500M16.5 10l-2.500 2.500M17.7 10l2.500 2.500M20.2 10l-2.500 2.500" stroke="#000" stroke-width="0.9" fill="none"/><path d="M4 15.500h3M9.500 13l-2 2.500 2 2.500M13 13l2 2.500-2 2.500M17.500 13v5M19 13v5" stroke="#000" fill="none" stroke-width="1.100"/><path d="M9.5 10.5L16.5 4" stroke="#e01818" stroke-width="3.4" stroke-linecap="butt"/><path d="M8.3 11.7l2.400-.6-1.800-1.800z" fill="#111"/><path d="M10.3 10.3l1.200 1.200" stroke="#f0d060" stroke-width="1.2"/></svg></div><div style="position:absolute;left:726px;top:51px;width:23px;height:22px;box-sizing:border-box;border:1px solid;border-color:#fdfdf8 #76736a #76736a #fdfdf8;background:#ECE9D8;box-shadow:inset -1px -1px 0 #c4c1b2"><svg width="23" height="22" viewBox="0 0 23 22" style="position:absolute;left:-1px;top:-1px"><path d="M4.500 4.500h5.500v5.500h-5.500zM12.500 4.500h6v5.500h-6zM4.500 11.500h5.500v6h-5.500zM12.500 11.500h6v6h-6zM7.200 4.500v13M15.500 4.500v13M4.500 7.200h14M4.500 14.500h14" stroke="#aaa798" fill="none"/><path d="M9 10.500l3-1.500v3z" fill="#aaa798"/></svg></div><div style="position:absolute;left:749px;top:51px;width:23px;height:22px;box-sizing:border-box;border:1px solid;border-color:#fdfdf8 #76736a #76736a #fdfdf8;background:#ECE9D8;box-shadow:inset -1px -1px 0 #c4c1b2"><svg width="23" height="22" viewBox="0 0 23 22" style="position:absolute;left:-1px;top:-1px"><circle cx="10.5" cy="10.5" r="6.8" fill="#fff" stroke="#1428d8" stroke-width="1.7"/><path d="M6 8.500h2M10 8.500h2M8 6.500v4M10 6.500v4M6 12.500h2.500M11 10.500l-2 2 2 2M12.500 10.500l2 2-2 2" stroke="#000" fill="none" stroke-width="1"/><path d="M15.3 15.3l3.600 3.200" stroke="#101060" stroke-width="2"/></svg></div><div style="position:absolute;left:778px;top:51px;width:23px;height:22px;box-sizing:border-box;border:1px solid;border-color:#fdfdf8 #76736a #76736a #fdfdf8;background:#ECE9D8;box-shadow:inset -1px -1px 0 #c4c1b2"><svg width="23" height="22" viewBox="0 0 23 22" style="position:absolute;left:-1px;top:-1px"><path d="M9 4h9l-1.500 3.500h-3.500l-1.500 3.500h4l-2 6.500h-9l1.500-3.500h3.500l1.500-3.500h-4z" fill="#aaa798"/></svg></div><div style="position:absolute;left:801px;top:51px;width:23px;height:22px;box-sizing:border-box;border:1px solid;border-color:#fdfdf8 #76736a #76736a #fdfdf8;background:#ECE9D8;box-shadow:inset -1px -1px 0 #c4c1b2"><svg width="23" height="22" viewBox="0 0 23 22" style="position:absolute;left:-1px;top:-1px"><rect x="6" y="4" width="11" height="3.500" fill="#aaa798"/><rect x="6" y="14.500" width="11" height="3.500" fill="#aaa798"/><path d="M11.500 8v4" stroke="#aaa798" stroke-width="2"/><path d="M8.500 10.500h6l-3 3z" fill="#aaa798"/></svg></div><div style="position:absolute;left:830px;top:51px;width:23px;height:22px;box-sizing:border-box;border:1px solid;border-color:#fdfdf8 #76736a #76736a #fdfdf8;background:#ECE9D8;box-shadow:inset -1px -1px 0 #c4c1b2"><svg width="23" height="22" viewBox="0 0 23 22" style="position:absolute;left:-1px;top:-1px"><rect x="8.500" y="3.500" width="10" height="9" fill="none" stroke="#aaa798" stroke-width="1.200"/><rect x="4.500" y="9.500" width="7" height="8" fill="#ECE9D8" stroke="#aaa798" stroke-width="1.200"/><path d="M10.500 10.500l3.500-3.500M14 7h-3M14 7v3" stroke="#aaa798" fill="none"/></svg></div><div style="position:absolute;left:853px;top:51px;width:23px;height:22px;box-sizing:border-box;border:1px solid;border-color:#fdfdf8 #76736a #76736a #fdfdf8;background:#ECE9D8;box-shadow:inset -1px -1px 0 #c4c1b2"><svg width="23" height="22" viewBox="0 0 23 22" style="position:absolute;left:-1px;top:-1px"><rect x="4.500" y="7.500" width="11" height="10" fill="none" stroke="#aaa798" stroke-width="1.200"/><rect x="12.500" y="3.500" width="6" height="6" fill="#ECE9D8" stroke="#aaa798" stroke-width="1.200"/><path d="M7.500 14.500l4.500-4.500M12 10h-3.500M12 10v3.500" stroke="#aaa798" fill="none"/></svg></div><div style="position:absolute;left:882px;top:51px;width:23px;height:22px;box-sizing:border-box;border:1px solid;border-color:#fdfdf8 #76736a #76736a #fdfdf8;background:#ECE9D8;box-shadow:inset -1px -1px 0 #c4c1b2"><svg width="23" height="22" viewBox="0 0 23 22" style="position:absolute;left:-1px;top:-1px"><circle cx="10.500" cy="10" r="6.500" fill="none" stroke="#aaa798" stroke-width="1.300"/><path d="M15 14.500l3.500 3.500" stroke="#aaa798" stroke-width="2"/><path d="M5 8.500h11M5 11.500h11M8.500 4.500v11M12.500 4.500v11" stroke="#aaa798"/><rect x="9" y="9" width="3.500" height="5" fill="#aaa798"/></svg></div><div style="position:absolute;left:911px;top:51px;width:23px;height:22px;box-sizing:border-box;border:1px solid;border-color:#fdfdf8 #76736a #76736a #fdfdf8;background:#ECE9D8;box-shadow:inset -1px -1px 0 #c4c1b2"><svg width="23" height="22" viewBox="0 0 23 22" style="position:absolute;left:-1px;top:-1px"><path d="M5 5.500h7M5 10.500h7M5 15.500h7M8.500 4v13.500" stroke="#aaa798" stroke-width="1.700" fill="none"/><path d="M16.500 6v10" stroke="#aaa798" stroke-width="1.300"/><path d="M14 7.500l2.500-3 2.500 3zM14 14.500l2.500 3 2.500-3z" fill="#aaa798"/></svg></div><div style="position:absolute;left:934px;top:51px;width:23px;height:22px;box-sizing:border-box;border:1px solid;border-color:#fdfdf8 #76736a #76736a #fdfdf8;background:#ECE9D8;box-shadow:inset -1px -1px 0 #c4c1b2"><svg width="23" height="22" viewBox="0 0 23 22" style="position:absolute;left:-1px;top:-1px"><path d="M5 5.500h7M5 10.500h7M5 15.500h7M8.500 4v13.500" stroke="#aaa798" stroke-width="1.700" fill="none"/><path d="M16.500 8v8M14 8.500h5M14 16.500h5" stroke="#aaa798" stroke-width="1.400"/></svg></div><div style="position:absolute;left:957px;top:51px;width:23px;height:22px;box-sizing:border-box;border:1px solid;border-color:#fdfdf8 #76736a #76736a #fdfdf8;background:#ECE9D8;box-shadow:inset -1px -1px 0 #c4c1b2"><svg width="23" height="22" viewBox="0 0 23 22" style="position:absolute;left:-1px;top:-1px"><path d="M5 5.500h7M5 10.500h7M5 15.500h7M8.500 4v13.500" stroke="#aaa798" stroke-width="1.700" fill="none"/><path d="M13 6.500h4.500v3.500h-2.500v5" stroke="#aaa798" stroke-width="1.300" fill="none"/><path d="M12.500 13.500l2.500 3.500 2.500-3.500z" fill="#aaa798"/></svg></div><div style="position:absolute;left:986px;top:51px;width:23px;height:22px;box-sizing:border-box;border:1px solid;border-color:#fdfdf8 #76736a #76736a #fdfdf8;background:#ECE9D8;box-shadow:inset -1px -1px 0 #c4c1b2"><svg width="23" height="22" viewBox="0 0 23 22" style="position:absolute;left:-1px;top:-1px"><rect x="5" y="5" width="13" height="10" fill="#aaa798"/><rect x="7.500" y="7.500" width="8" height="5" fill="#ECE9D8"/><path d="M9.500 8.500v3M11.500 8.500v3M13.500 8.500v3" stroke="#aaa798" stroke-width="1.200"/><path d="M4 16.500h15" stroke="#aaa798" stroke-width="1.600"/></svg></div><div style="position:absolute;left:6px;top:82px;width:119px;height:19px;box-sizing:border-box;border:1px solid;border-color:#9d9a8b #fff #fff #9d9a8b;background:#fff"><div style="position:absolute;left:0px;top:0px;width:117px;height:17px;box-sizing:border-box;border:1px solid;border-color:#55524a #e0ddd0 #e0ddd0 #55524a"></div></div><div style="position:absolute;left:107px;top:84px;width:16px;height:16px;box-sizing:border-box;border:1px solid;border-color:#fdfdf8 #76736a #76736a #fdfdf8;background:#ECE9D8;box-shadow:inset -1px -1px 0 #c4c1b2"><svg width="16" height="16" viewBox="0 0 16 16" style="position:absolute;left:-1px;top:-1px"><path d="M4.500 6.500h7l-3.500 4z" fill="#000"/></svg></div><svg width="60" height="19" viewBox="0 0 60 19" style="position:absolute;left:6px;top:82px" ><text x="3.5" y="15" font-family='"Liberation Sans","Noto Sans CJK SC",sans-serif' font-size="12" font-weight="normal" fill="#000" textLength="23.0" lengthAdjust="spacingAndGlyphs" >程序</text></svg><div style="position:absolute;left:133px;top:82px;width:118px;height:19px;box-sizing:border-box;border:1px solid;border-color:#9d9a8b #fff #fff #9d9a8b;background:#fff"><div style="position:absolute;left:0px;top:0px;width:116px;height:17px;box-sizing:border-box;border:1px solid;border-color:#55524a #e0ddd0 #e0ddd0 #55524a"></div></div><div style="position:absolute;left:233px;top:84px;width:16px;height:16px;box-sizing:border-box;border:1px solid;border-color:#fdfdf8 #76736a #76736a #fdfdf8;background:#ECE9D8;box-shadow:inset -1px -1px 0 #c4c1b2"><svg width="16" height="16" viewBox="0 0 16 16" style="position:absolute;left:-1px;top:-1px"><path d="M4.500 6.500h7l-3.500 4z" fill="#000"/></svg></div><div style="position:absolute;left:260px;top:81px;width:23px;height:22px;box-sizing:border-box;border:1px solid;border-color:#fdfdf8 #76736a #76736a #fdfdf8;background:#ECE9D8;box-shadow:inset -1px -1px 0 #c4c1b2"><svg width="23" height="22" viewBox="0 0 23 22" style="position:absolute;left:-1px;top:-1px"><path d="M5.500 5.500h6l3 3v9h-9z" fill="#fff" stroke="#000"/><path d="M11.500 5.500v3h3" fill="none" stroke="#000"/><circle cx="13" cy="6.500" r="3" fill="#fff" stroke="#1818a8" stroke-width="1.200"/><path d="M15 9l3 3.500" stroke="#1818a8" stroke-width="1.600"/></svg></div><div style="position:absolute;left:283px;top:81px;width:23px;height:22px;box-sizing:border-box;border:1px solid;border-color:#fdfdf8 #76736a #76736a #fdfdf8;background:#ECE9D8;box-shadow:inset -1px -1px 0 #c4c1b2"><svg width="23" height="22" viewBox="0 0 23 22" style="position:absolute;left:-1px;top:-1px"><path d="M6.500 3v15" stroke="#1818a8" stroke-dasharray="1.500 1.500"/><rect x="4" y="6" width="5" height="3" fill="#1818a8"/><path d="M9 7.500h3M12.500 7.500v8M12.500 11.500h3M12.500 15.500h3" stroke="#1818a8" fill="none"/><rect x="11" y="5.500" width="6" height="4" fill="#d020d0"/><rect x="15" y="10" width="4" height="3" fill="#1818a8"/><rect x="15" y="14" width="4" height="3" fill="#1818a8"/></svg></div><div style="position:absolute;left:323px;top:81px;width:26px;height:25px;box-sizing:border-box;border:1px solid;border-color:#fdfdf8 #76736a #76736a #fdfdf8;background:#ECE9D8;box-shadow:inset -1px -1px 0 #c4c1b2"><svg width="26" height="25" viewBox="0 0 26 25" style="position:absolute;left:-1px;top:-1px"><path d="M4 8.500h4.500M15.500 8.500h5M8.500 3v10M15.500 3v10" stroke="#000" stroke-width="1.1" fill="none" shape-rendering="crispEdges"/><text x="7.3" y="21.700" font-family='"Liberation Sans","Noto Sans CJK SC",sans-serif' font-size="10" stroke="#000" stroke-width=".15" textLength="12" lengthAdjust="spacingAndGlyphs">F5</text></svg></div><div style="position:absolute;left:349px;top:81px;width:26px;height:25px;box-sizing:border-box;border:1px solid;border-color:#fdfdf8 #76736a #76736a #fdfdf8;background:#ECE9D8;box-shadow:inset -1px -1px 0 #c4c1b2"><svg width="26" height="25" viewBox="0 0 26 25" style="position:absolute;left:-1px;top:-1px"><path d="M4.500 3v5.500h4M8.500 3v10M15.500 3v10M15.500 8.500h5v-5.500" stroke="#000" stroke-width="1.1" fill="none" shape-rendering="crispEdges"/><text x="4.6" y="21.700" font-family='"Liberation Sans","Noto Sans CJK SC",sans-serif' font-size="10" stroke="#000" stroke-width=".15" textLength="17.5" lengthAdjust="spacingAndGlyphs">sF5</text></svg></div><div style="position:absolute;left:375px;top:81px;width:26px;height:25px;box-sizing:border-box;border:1px solid;border-color:#fdfdf8 #76736a #76736a #fdfdf8;background:#ECE9D8;box-shadow:inset -1px -1px 0 #c4c1b2"><svg width="26" height="25" viewBox="0 0 26 25" style="position:absolute;left:-1px;top:-1px"><path d="M4 8.500h5M15.500 8.500h5M9.500 3v10M15.500 3v10" stroke="#000" stroke-width="1.1" fill="none" shape-rendering="crispEdges"/><path d="M10 12.500l5.500-9" stroke="#000" stroke-width="1.5" fill="none" /><text x="7.3" y="21.700" font-family='"Liberation Sans","Noto Sans CJK SC",sans-serif' font-size="10" stroke="#000" stroke-width=".15" textLength="12" lengthAdjust="spacingAndGlyphs">F6</text></svg></div><div style="position:absolute;left:401px;top:81px;width:26px;height:25px;box-sizing:border-box;border:1px solid;border-color:#fdfdf8 #76736a #76736a #fdfdf8;background:#ECE9D8;box-shadow:inset -1px -1px 0 #c4c1b2"><svg width="26" height="25" viewBox="0 0 26 25" style="position:absolute;left:-1px;top:-1px"><path d="M4.500 3v5.500h4M8.500 3v10M16.500 3v10M16.500 8.500h4v-5.500" stroke="#000" stroke-width="1.1" fill="none" shape-rendering="crispEdges"/><path d="M9 12.500l7.500-9" stroke="#000" stroke-width="1.5" fill="none" /><text x="4.6" y="21.700" font-family='"Liberation Sans","Noto Sans CJK SC",sans-serif' font-size="10" stroke="#000" stroke-width=".15" textLength="17.5" lengthAdjust="spacingAndGlyphs">sF6</text></svg></div><div style="position:absolute;left:427px;top:81px;width:26px;height:25px;box-sizing:border-box;border:1px solid;border-color:#fdfdf8 #76736a #76736a #fdfdf8;background:#ECE9D8;box-shadow:inset -1px -1px 0 #c4c1b2"><svg width="26" height="25" viewBox="0 0 26 25" style="position:absolute;left:-1px;top:-1px"><path d="M4 8.500h3.500M17.500 8.500h3.500" stroke="#000" stroke-width="1.1" fill="none" shape-rendering="crispEdges"/><circle cx="12.500" cy="8.500" r="5" fill="none" stroke="#000" stroke-width="1.100"/><text x="7.3" y="21.700" font-family='"Liberation Sans","Noto Sans CJK SC",sans-serif' font-size="10" stroke="#000" stroke-width=".15" textLength="12" lengthAdjust="spacingAndGlyphs">F7</text></svg></div><div style="position:absolute;left:453px;top:81px;width:26px;height:25px;box-sizing:border-box;border:1px solid;border-color:#fdfdf8 #76736a #76736a #fdfdf8;background:#ECE9D8;box-shadow:inset -1px -1px 0 #c4c1b2"><svg width="26" height="25" viewBox="0 0 26 25" style="position:absolute;left:-1px;top:-1px"><path d="M4 8.500h3.500M18.500 8.500h3M11.500 3.500h-3v9h3M14.500 3.500h3v9h-3" stroke="#000" stroke-width="1.1" fill="none" shape-rendering="crispEdges"/><text x="7.3" y="21.700" font-family='"Liberation Sans","Noto Sans CJK SC",sans-serif' font-size="10" stroke="#000" stroke-width=".15" textLength="12" lengthAdjust="spacingAndGlyphs">F8</text></svg></div><div style="position:absolute;left:485px;top:81px;width:26px;height:25px;box-sizing:border-box;border:1px solid;border-color:#fdfdf8 #76736a #76736a #fdfdf8;background:#ECE9D8;box-shadow:inset -1px -1px 0 #c4c1b2"><svg width="26" height="25" viewBox="0 0 26 25" style="position:absolute;left:-1px;top:-1px"><path d="M4 7.500h17" stroke="#000" stroke-width="1.1" fill="none" shape-rendering="crispEdges"/><text x="7.3" y="21.700" font-family='"Liberation Sans","Noto Sans CJK SC",sans-serif' font-size="10" stroke="#000" stroke-width=".15" textLength="12" lengthAdjust="spacingAndGlyphs">F9</text></svg></div><div style="position:absolute;left:511px;top:81px;width:26px;height:25px;box-sizing:border-box;border:1px solid;border-color:#fdfdf8 #76736a #76736a #fdfdf8;background:#ECE9D8;box-shadow:inset -1px -1px 0 #c4c1b2"><svg width="26" height="25" viewBox="0 0 26 25" style="position:absolute;left:-1px;top:-1px"><path d="M12.500 3v9.500" stroke="#000" stroke-width="1.1" fill="none" shape-rendering="crispEdges"/><text x="4.6" y="21.700" font-family='"Liberation Sans","Noto Sans CJK SC",sans-serif' font-size="10" stroke="#000" stroke-width=".15" textLength="17.5" lengthAdjust="spacingAndGlyphs">sF9</text></svg></div><div style="position:absolute;left:537px;top:81px;width:26px;height:25px;box-sizing:border-box;border:1px solid;border-color:#fdfdf8 #76736a #76736a #fdfdf8;background:#ECE9D8;box-shadow:inset -1px -1px 0 #c4c1b2"><svg width="26" height="25" viewBox="0 0 26 25" style="position:absolute;left:-1px;top:-1px"><path d="M4 7.500h17" stroke="#000" stroke-width="1.1" fill="none" shape-rendering="crispEdges"/><path d="M6 3l11.500 9M17.500 3l-11.500 9" stroke="#e81c1c" stroke-width="0.9" fill="none" /><text x="4.6" y="21.700" font-family='"Liberation Sans","Noto Sans CJK SC",sans-serif' font-size="10" stroke="#000" stroke-width=".15" textLength="17.5" lengthAdjust="spacingAndGlyphs">cF9</text></svg></div><div style="position:absolute;left:563px;top:81px;width:26px;height:25px;box-sizing:border-box;border:1px solid;border-color:#fdfdf8 #76736a #76736a #fdfdf8;background:#ECE9D8;box-shadow:inset -1px -1px 0 #c4c1b2"><svg width="26" height="25" viewBox="0 0 26 25" style="position:absolute;left:-1px;top:-1px"><path d="M12.500 3v9.500" stroke="#000" stroke-width="1.1" fill="none" shape-rendering="crispEdges"/><path d="M7.500 3l9.500 9M17 3l-9.500 9" stroke="#e81c1c" stroke-width="0.9" fill="none" /><text x="4.1" y="21.700" font-family='"Liberation Sans","Noto Sans CJK SC",sans-serif' font-size="10" stroke="#000" stroke-width=".15" textLength="18.5" lengthAdjust="spacingAndGlyphs">cF10</text></svg></div><div style="position:absolute;left:595px;top:81px;width:26px;height:25px;box-sizing:border-box;border:1px solid;border-color:#fdfdf8 #76736a #76736a #fdfdf8;background:#ECE9D8;box-shadow:inset -1px -1px 0 #c4c1b2"><svg width="26" height="25" viewBox="0 0 26 25" style="position:absolute;left:-1px;top:-1px"><path d="M4 8.500h5M16.500 8.500h4.500M9.500 3v10M16.500 3v10M13.500 3.500v9.500" stroke="#000" stroke-width="1.1" fill="none" shape-rendering="crispEdges"/><path d="M11.500 6l2-2.500 2 2.500" stroke="#000" stroke-width="1.1" fill="none" /><text x="4.6" y="21.700" font-family='"Liberation Sans","Noto Sans CJK SC",sans-serif' font-size="10" stroke="#000" stroke-width=".15" textLength="17.5" lengthAdjust="spacingAndGlyphs">sF7</text></svg></div><div style="position:absolute;left:621px;top:81px;width:26px;height:25px;box-sizing:border-box;border:1px solid;border-color:#fdfdf8 #76736a #76736a #fdfdf8;background:#ECE9D8;box-shadow:inset -1px -1px 0 #c4c1b2"><svg width="26" height="25" viewBox="0 0 26 25" style="position:absolute;left:-1px;top:-1px"><path d="M4 8.500h5M16.500 8.500h4.500M9.500 3v10M16.500 3v10M12.500 3v9.500" stroke="#000" stroke-width="1.1" fill="none" shape-rendering="crispEdges"/><path d="M10.500 10l2 2.500 2-2.500" stroke="#000" stroke-width="1.1" fill="none" /><text x="4.6" y="21.700" font-family='"Liberation Sans","Noto Sans CJK SC",sans-serif' font-size="10" stroke="#000" stroke-width=".15" textLength="17.5" lengthAdjust="spacingAndGlyphs">sF8</text></svg></div><div style="position:absolute;left:647px;top:81px;width:26px;height:25px;box-sizing:border-box;border:1px solid;border-color:#fdfdf8 #76736a #76736a #fdfdf8;background:#ECE9D8;box-shadow:inset -1px -1px 0 #c4c1b2"><svg width="26" height="25" viewBox="0 0 26 25" style="position:absolute;left:-1px;top:-1px"><path d="M4.500 3v5.500h4M8.500 3v10M17.500 3v10M17.500 8.500h4v-5.500M13.500 3.500v9.500" stroke="#000" stroke-width="1.1" fill="none" shape-rendering="crispEdges"/><path d="M11.500 6l2-2.500 2 2.500" stroke="#000" stroke-width="1.1" fill="none" /><text x="4.6" y="21.700" font-family='"Liberation Sans","Noto Sans CJK SC",sans-serif' font-size="10" stroke="#000" stroke-width=".15" textLength="17.5" lengthAdjust="spacingAndGlyphs">aF7</text></svg></div><div style="position:absolute;left:673px;top:81px;width:26px;height:25px;box-sizing:border-box;border:1px solid;border-color:#fdfdf8 #76736a #76736a #fdfdf8;background:#ECE9D8;box-shadow:inset -1px -1px 0 #c4c1b2"><svg width="26" height="25" viewBox="0 0 26 25" style="position:absolute;left:-1px;top:-1px"><path d="M4.500 3v5.500h4M8.500 3v10M17.500 3v10M17.500 8.500h4v-5.500M12.500 3v9.500" stroke="#000" stroke-width="1.1" fill="none" shape-rendering="crispEdges"/><path d="M10.500 10l2 2.500 2-2.500" stroke="#000" stroke-width="1.1" fill="none" /><text x="4.6" y="21.700" font-family='"Liberation Sans","Noto Sans CJK SC",sans-serif' font-size="10" stroke="#000" stroke-width=".15" textLength="17.5" lengthAdjust="spacingAndGlyphs">aF8</text></svg></div><div style="position:absolute;left:705px;top:81px;width:26px;height:25px;box-sizing:border-box;border:1px solid;border-color:#fdfdf8 #76736a #76736a #fdfdf8;background:#ECE9D8;box-shadow:inset -1px -1px 0 #c4c1b2"><svg width="26" height="25" viewBox="0 0 26 25" style="position:absolute;left:-1px;top:-1px"><path d="M11.500 3.500v9.500" stroke="#000" stroke-width="1.1" fill="none" shape-rendering="crispEdges"/><path d="M9 6.500l2.500-3 2.500 3" stroke="#000" stroke-width="1.1" fill="none" /><text x="4.6" y="21.700" font-family='"Liberation Sans","Noto Sans CJK SC",sans-serif' font-size="10" stroke="#000" stroke-width=".15" textLength="17.5" lengthAdjust="spacingAndGlyphs">aF5</text></svg></div><div style="position:absolute;left:731px;top:81px;width:26px;height:25px;box-sizing:border-box;border:1px solid;border-color:#fdfdf8 #76736a #76736a #fdfdf8;background:#ECE9D8;box-shadow:inset -1px -1px 0 #c4c1b2"><svg width="26" height="25" viewBox="0 0 26 25" style="position:absolute;left:-1px;top:-1px"><path d="M12.500 3v9.500" stroke="#000" stroke-width="1.1" fill="none" shape-rendering="crispEdges"/><path d="M10 9.500l2.500 3 2.500-3" stroke="#000" stroke-width="1.1" fill="none" /><text x="4.1" y="21.700" font-family='"Liberation Sans","Noto Sans CJK SC",sans-serif' font-size="10" stroke="#000" stroke-width=".15" textLength="18.5" lengthAdjust="spacingAndGlyphs">caF5</text></svg></div><div style="position:absolute;left:757px;top:81px;width:26px;height:25px;box-sizing:border-box;border:1px solid;border-color:#fdfdf8 #76736a #76736a #fdfdf8;background:#ECE9D8;box-shadow:inset -1px -1px 0 #c4c1b2"><svg width="26" height="25" viewBox="0 0 26 25" style="position:absolute;left:-1px;top:-1px"><path d="M4 8.500h17" stroke="#000" stroke-width="1.1" fill="none" shape-rendering="crispEdges"/><path d="M9.500 11.500l7-6.500" stroke="#000" stroke-width="1.2" fill="none" /><text x="3.3" y="21.700" font-family='"Liberation Sans","Noto Sans CJK SC",sans-serif' font-size="10" stroke="#000" stroke-width=".15" textLength="20" lengthAdjust="spacingAndGlyphs">caF10</text></svg></div><div style="position:absolute;left:783px;top:81px;width:26px;height:25px;box-sizing:border-box;border:1px solid;border-color:#fdfdf8 #76736a #76736a #fdfdf8;background:#ECE9D8;box-shadow:inset -1px -1px 0 #c4c1b2"><svg width="26" height="25" viewBox="0 0 26 25" style="position:absolute;left:-1px;top:-1px"><path d="M3 5.500h19M7.500 5.500v6.500M7 11.500h15" stroke="#000" stroke-width="1.1" fill="none" shape-rendering="crispEdges"/><text x="4.6" y="21.700" font-family='"Liberation Sans","Noto Sans CJK SC",sans-serif' font-size="10" stroke="#000" stroke-width=".15" textLength="17.5" lengthAdjust="spacingAndGlyphs">F10</text></svg></div><div style="position:absolute;left:809px;top:81px;width:26px;height:25px;box-sizing:border-box;border:1px solid;border-color:#fdfdf8 #76736a #76736a #fdfdf8;background:#ECE9D8;box-shadow:inset -1px -1px 0 #c4c1b2"><svg width="26" height="25" viewBox="0 0 26 25" style="position:absolute;left:-1px;top:-1px"><path d="M3 5.500h19M7.500 5.500v6.500M7 11.500h15" stroke="#000" stroke-width="1.1" fill="none" shape-rendering="crispEdges"/><path d="M6 3l9 9M15 3l-9 9" stroke="#e81c1c" stroke-width="1" fill="none" /><text x="4.6" y="21.700" font-family='"Liberation Sans","Noto Sans CJK SC",sans-serif' font-size="10" stroke="#000" stroke-width=".15" textLength="17.5" lengthAdjust="spacingAndGlyphs">aF9</text></svg></div><div style="position:absolute;left:0px;top:110px;width:685px;height:639px;box-sizing:border-box;border:1px solid;border-color:#d8d5c6 #fff #fff #c9c6b8;background:#000"></div><div style="position:absolute;left:683px;top:111px;width:1px;height:637px;background:#f4f2e8"></div><div style="position:absolute;left:2px;top:112px;width:681px;height:636px;background:#fff"></div><svg width="664" height="619" viewBox="2 112 664 619" style="position:absolute;left:2px;top:112px" shape-rendering="crispEdges"><text x="46.5" y="124" font-family='"Liberation Sans","Noto Sans CJK SC",sans-serif' font-size="11" text-anchor="middle" stroke="#000" stroke-width=".2">1</text><text x="120.5" y="124" font-family='"Liberation Sans","Noto Sans CJK SC",sans-serif' font-size="11" text-anchor="middle" stroke="#000" stroke-width=".2">2</text><text x="193.5" y="124" font-family='"Liberation Sans","Noto Sans CJK SC",sans-serif' font-size="11" text-anchor="middle" stroke="#000" stroke-width=".2">3</text><text x="267.5" y="124" font-family='"Liberation Sans","Noto Sans CJK SC",sans-serif' font-size="11" text-anchor="middle" stroke="#000" stroke-width=".2">4</text><text x="341.5" y="124" font-family='"Liberation Sans","Noto Sans CJK SC",sans-serif' font-size="11" text-anchor="middle" stroke="#000" stroke-width=".2">5</text><text x="415.5" y="124" font-family='"Liberation Sans","Noto Sans CJK SC",sans-serif' font-size="11" text-anchor="middle" stroke="#000" stroke-width=".2">6</text><text x="488.5" y="124" font-family='"Liberation Sans","Noto Sans CJK SC",sans-serif' font-size="11" text-anchor="middle" stroke="#000" stroke-width=".2">7</text><text x="562.5" y="124" font-family='"Liberation Sans","Noto Sans CJK SC",sans-serif' font-size="11" text-anchor="middle" stroke="#000" stroke-width=".2">8</text><text x="636.5" y="124" font-family='"Liberation Sans","Noto Sans CJK SC",sans-serif' font-size="11" text-anchor="middle" stroke="#000" stroke-width=".2">9</text><text x="30.5" y="142" font-family='"Liberation Sans","Noto Sans CJK SC",sans-serif' font-size="11" text-anchor="end" stroke="#000" stroke-width=".2">9</text><text x="30.5" y="162" font-family='"Liberation Sans","Noto Sans CJK SC",sans-serif' font-size="11" text-anchor="end" stroke="#000" stroke-width=".2">10</text><text x="30.5" y="181" font-family='"Liberation Sans","Noto Sans CJK SC",sans-serif' font-size="11" text-anchor="end" stroke="#000" stroke-width=".2">11</text><text x="30.5" y="201" font-family='"Liberation Sans","Noto Sans CJK SC",sans-serif' font-size="11" text-anchor="end" stroke="#000" stroke-width=".2">12</text><text x="30.5" y="221" font-family='"Liberation Sans","Noto Sans CJK SC",sans-serif' font-size="11" text-anchor="end" stroke="#000" stroke-width=".2">13</text><text x="30.5" y="241" font-family='"Liberation Sans","Noto Sans CJK SC",sans-serif' font-size="11" text-anchor="end" stroke="#000" stroke-width=".2">14</text><text x="30.5" y="261" font-family='"Liberation Sans","Noto Sans CJK SC",sans-serif' font-size="11" text-anchor="end" stroke="#000" stroke-width=".2">15</text><text x="30.5" y="280" font-family='"Liberation Sans","Noto Sans CJK SC",sans-serif' font-size="11" text-anchor="end" stroke="#000" stroke-width=".2">16</text><text x="30.5" y="300" font-family='"Liberation Sans","Noto Sans CJK SC",sans-serif' font-size="11" text-anchor="end" stroke="#000" stroke-width=".2">17</text><text x="30.5" y="320" font-family='"Liberation Sans","Noto Sans CJK SC",sans-serif' font-size="11" text-anchor="end" stroke="#000" stroke-width=".2">18</text><text x="30.5" y="340" font-family='"Liberation Sans","Noto Sans CJK SC",sans-serif' font-size="11" text-anchor="end" stroke="#000" stroke-width=".2">19</text><text x="30.5" y="360" font-family='"Liberation Sans","Noto Sans CJK SC",sans-serif' font-size="11" text-anchor="end" stroke="#000" stroke-width=".2">20</text><text x="30.5" y="379" font-family='"Liberation Sans","Noto Sans CJK SC",sans-serif' font-size="11" text-anchor="end" stroke="#000" stroke-width=".2">21</text><text x="30.5" y="399" font-family='"Liberation Sans","Noto Sans CJK SC",sans-serif' font-size="11" text-anchor="end" stroke="#000" stroke-width=".2">22</text><text x="30.5" y="419" font-family='"Liberation Sans","Noto Sans CJK SC",sans-serif' font-size="11" text-anchor="end" stroke="#000" stroke-width=".2">23</text><text x="30.5" y="439" font-family='"Liberation Sans","Noto Sans CJK SC",sans-serif' font-size="11" text-anchor="end" stroke="#000" stroke-width=".2">24</text><text x="30.5" y="458" font-family='"Liberation Sans","Noto Sans CJK SC",sans-serif' font-size="11" text-anchor="end" stroke="#000" stroke-width=".2">25</text><text x="30.5" y="478" font-family='"Liberation Sans","Noto Sans CJK SC",sans-serif' font-size="11" text-anchor="end" stroke="#000" stroke-width=".2">26</text><text x="30.5" y="498" font-family='"Liberation Sans","Noto Sans CJK SC",sans-serif' font-size="11" text-anchor="end" stroke="#000" stroke-width=".2">27</text><text x="30.5" y="518" font-family='"Liberation Sans","Noto Sans CJK SC",sans-serif' font-size="11" text-anchor="end" stroke="#000" stroke-width=".2">28</text><text x="30.5" y="538" font-family='"Liberation Sans","Noto Sans CJK SC",sans-serif' font-size="11" text-anchor="end" stroke="#000" stroke-width=".2">29</text><text x="30.5" y="557" font-family='"Liberation Sans","Noto Sans CJK SC",sans-serif' font-size="11" text-anchor="end" stroke="#000" stroke-width=".2">30</text><text x="30.5" y="577" font-family='"Liberation Sans","Noto Sans CJK SC",sans-serif' font-size="11" text-anchor="end" stroke="#000" stroke-width=".2">31</text><text x="30.5" y="597" font-family='"Liberation Sans","Noto Sans CJK SC",sans-serif' font-size="11" text-anchor="end" stroke="#000" stroke-width=".2">32</text><text x="30.5" y="617" font-family='"Liberation Sans","Noto Sans CJK SC",sans-serif' font-size="11" text-anchor="end" stroke="#000" stroke-width=".2">33</text><text x="30.5" y="637" font-family='"Liberation Sans","Noto Sans CJK SC",sans-serif' font-size="11" text-anchor="end" stroke="#000" stroke-width=".2">34</text><text x="30.5" y="656" font-family='"Liberation Sans","Noto Sans CJK SC",sans-serif' font-size="11" text-anchor="end" stroke="#000" stroke-width=".2">35</text><text x="30.5" y="676" font-family='"Liberation Sans","Noto Sans CJK SC",sans-serif' font-size="11" text-anchor="end" stroke="#000" stroke-width=".2">36</text><text x="30.5" y="696" font-family='"Liberation Sans","Noto Sans CJK SC",sans-serif' font-size="11" text-anchor="end" stroke="#000" stroke-width=".2">37</text><text x="30.5" y="716" font-family='"Liberation Sans","Noto Sans CJK SC",sans-serif' font-size="11" text-anchor="end" stroke="#000" stroke-width=".2">38</text><text x="30.5" y="736" font-family='"Liberation Sans","Noto Sans CJK SC",sans-serif' font-size="11" text-anchor="end" stroke="#000" stroke-width=".2">39</text><line x1="45.5" y1="130" x2="45.5" y2="740" stroke="#000" stroke-width="1"/><line x1="266.5" y1="199" x2="266.5" y2="740" stroke="#000" stroke-width="1"/><line x1="119.5" y1="238" x2="119.5" y2="338" stroke="#000" stroke-width="1"/><line x1="340.5" y1="238" x2="340.5" y2="338" stroke="#000" stroke-width="1"/><line x1="119.5" y1="416" x2="119.5" y2="496" stroke="#000" stroke-width="1"/><line x1="192.5" y1="416" x2="192.5" y2="497" stroke="#000" stroke-width="1"/><line x1="45" y1="199.5" x2="267" y2="199.5" stroke="#000" stroke-width="1"/><line x1="45" y1="203.5" x2="267" y2="203.5" stroke="#000" stroke-width="1"/><line x1="45" y1="238.5" x2="120" y2="238.5" stroke="#000" stroke-width="1"/><line x1="266" y1="238.5" x2="341" y2="238.5" stroke="#000" stroke-width="1"/><line x1="45" y1="416.5" x2="193" y2="416.5" stroke="#000" stroke-width="1"/><line x1="45" y1="496.5" x2="193" y2="496.5" stroke="#000" stroke-width="1"/><line x1="266" y1="555.5" x2="341" y2="555.5" stroke="#000" stroke-width="1"/><line x1="266" y1="559.5" x2="341" y2="559.5" stroke="#000" stroke-width="1"/><rect x="36.5" y="150.5" width="18" height="19" fill="#fff" stroke="#000"/><path d="M36.5 150.5L54.5 169.5M54.5 150.5L36.5 169.5" stroke="#000" stroke-width="1" fill="none" shape-rendering="auto"/><circle cx="45.5" cy="159.5" r="2" fill="#000" shape-rendering="auto"/><text x="55" y="163" font-family='"Liberation Sans","Noto Sans CJK SC",sans-serif' font-size="11" text-anchor="start" stroke="#000" stroke-width=".2">40</text><line x1="36" y1="179.5" x2="55" y2="179.5" stroke="#000" stroke-width="1"/><text x="55" y="182" font-family='"Liberation Sans","Noto Sans CJK SC",sans-serif' font-size="11" text-anchor="start" stroke="#000" stroke-width=".2">0</text><rect x="36.5" y="209.5" width="18" height="19" fill="#fff" stroke="#000"/><path d="M36.5 209.5L54.5 228.5M54.5 209.5L36.5 228.5" stroke="#000" stroke-width="1" fill="none" shape-rendering="auto"/><text x="55" y="222" font-family='"Liberation Sans","Noto Sans CJK SC",sans-serif' font-size="11" text-anchor="start" stroke="#000" stroke-width=".2">30</text><line x1="36" y1="258.5" x2="55" y2="258.5" stroke="#000" stroke-width="1"/><text x="55" y="261" font-family='"Liberation Sans","Noto Sans CJK SC",sans-serif' font-size="11" text-anchor="start" stroke="#000" stroke-width=".2">34</text><rect x="36.5" y="268.5" width="18" height="19" fill="#fff" stroke="#000"/><text x="55" y="281" font-family='"Liberation Sans","Noto Sans CJK SC",sans-serif' font-size="11" text-anchor="start" stroke="#000" stroke-width=".2">1</text><line x1="36" y1="298.5" x2="55" y2="298.5" stroke="#000" stroke-width="1"/><text x="55" y="300" font-family='"Liberation Sans","Noto Sans CJK SC",sans-serif' font-size="11" text-anchor="start" stroke="#000" stroke-width=".2">1</text><rect x="36.5" y="328.5" width="18" height="19" fill="#fff" stroke="#000"/><text x="55" y="341" font-family='"Liberation Sans","Noto Sans CJK SC",sans-serif' font-size="11" text-anchor="start" stroke="#000" stroke-width=".2">2</text><line x1="36" y1="357.5" x2="55" y2="357.5" stroke="#000" stroke-width="1"/><text x="55" y="360" font-family='"Liberation Sans","Noto Sans CJK SC",sans-serif' font-size="11" text-anchor="start" stroke="#000" stroke-width=".2">2</text><rect x="36.5" y="387.5" width="18" height="19" fill="#fff" stroke="#000"/><path d="M36.5 387.5L54.5 406.5M54.5 387.5L36.5 406.5" stroke="#000" stroke-width="1" fill="none" shape-rendering="auto"/><text x="55" y="400" font-family='"Liberation Sans","Noto Sans CJK SC",sans-serif' font-size="11" text-anchor="start" stroke="#000" stroke-width=".2">3</text><line x1="36" y1="436.5" x2="55" y2="436.5" stroke="#000" stroke-width="1"/><text x="55" y="439" font-family='"Liberation Sans","Noto Sans CJK SC",sans-serif' font-size="11" text-anchor="start" stroke="#000" stroke-width=".2">3</text><rect x="36.5" y="446.5" width="18" height="19" fill="#fff" stroke="#000"/><text x="55" y="459" font-family='"Liberation Sans","Noto Sans CJK SC",sans-serif' font-size="11" text-anchor="start" stroke="#000" stroke-width=".2">4</text><line x1="36" y1="476.5" x2="55" y2="476.5" stroke="#000" stroke-width="1"/><text x="55" y="479" font-family='"Liberation Sans","Noto Sans CJK SC",sans-serif' font-size="11" text-anchor="start" stroke="#000" stroke-width=".2">6</text><rect x="36.5" y="506.5" width="18" height="19" fill="#fff" stroke="#000"/><text x="55" y="519" font-family='"Liberation Sans","Noto Sans CJK SC",sans-serif' font-size="11" text-anchor="start" stroke="#000" stroke-width=".2">7</text><line x1="36" y1="535.5" x2="55" y2="535.5" stroke="#000" stroke-width="1"/><text x="55" y="538" font-family='"Liberation Sans","Noto Sans CJK SC",sans-serif' font-size="11" text-anchor="start" stroke="#000" stroke-width=".2">9</text><rect x="36.5" y="565.5" width="18" height="19" fill="#fff" stroke="#000"/><text x="55" y="578" font-family='"Liberation Sans","Noto Sans CJK SC",sans-serif' font-size="11" text-anchor="start" stroke="#000" stroke-width=".2">8</text><line x1="36" y1="595.5" x2="55" y2="595.5" stroke="#000" stroke-width="1"/><text x="55" y="597" font-family='"Liberation Sans","Noto Sans CJK SC",sans-serif' font-size="11" text-anchor="start" stroke="#000" stroke-width=".2">10</text><rect x="36.5" y="625.5" width="18" height="19" fill="#fff" stroke="#000"/><text x="55" y="638" font-family='"Liberation Sans","Noto Sans CJK SC",sans-serif' font-size="11" text-anchor="start" stroke="#000" stroke-width=".2">9</text><line x1="36" y1="654.5" x2="55" y2="654.5" stroke="#000" stroke-width="1"/><text x="55" y="657" font-family='"Liberation Sans","Noto Sans CJK SC",sans-serif' font-size="11" text-anchor="start" stroke="#000" stroke-width=".2">11</text><rect x="36.5" y="684.5" width="18" height="19" fill="#fff" stroke="#000"/><path d="M36.5 684.5L54.5 703.5M54.5 684.5L36.5 703.5" stroke="#000" stroke-width="1" fill="none" shape-rendering="auto"/><text x="55" y="697" font-family='"Liberation Sans","Noto Sans CJK SC",sans-serif' font-size="11" text-anchor="start" stroke="#000" stroke-width=".2">26</text><line x1="36" y1="713.5" x2="55" y2="713.5" stroke="#000" stroke-width="1"/><text x="55" y="716" font-family='"Liberation Sans","Noto Sans CJK SC",sans-serif' font-size="11" text-anchor="start" stroke="#000" stroke-width=".2">37</text><line x1="110" y1="258.5" x2="129" y2="258.5" stroke="#000" stroke-width="1"/><text x="129" y="261" font-family='"Liberation Sans","Noto Sans CJK SC",sans-serif' font-size="11" text-anchor="start" stroke="#000" stroke-width=".2">35</text><rect x="110.5" y="268.5" width="18" height="19" fill="#fff" stroke="#000"/><text x="129" y="281" font-family='"Liberation Sans","Noto Sans CJK SC",sans-serif' font-size="11" text-anchor="start" stroke="#000" stroke-width=".2">31</text><line x1="110" y1="298.5" x2="129" y2="298.5" stroke="#000" stroke-width="1"/><text x="129" y="300" font-family='"Liberation Sans","Noto Sans CJK SC",sans-serif' font-size="11" text-anchor="start" stroke="#000" stroke-width=".2">36</text><line x1="119" y1="337.5" x2="128" y2="337.5" stroke="#000" stroke-width="1"/><path d="M123 333.5L128 337.5L123 341.5" stroke="#000" fill="none" shape-rendering="auto"/><rect x="126" y="336" width="3" height="3" fill="#000"/><text x="129" y="341" font-family='"Liberation Sans","Noto Sans CJK SC",sans-serif' font-size="11" text-anchor="start" stroke="#000" stroke-width=".2">32</text><line x1="110" y1="436.5" x2="129" y2="436.5" stroke="#000" stroke-width="1"/><text x="129" y="439" font-family='"Liberation Sans","Noto Sans CJK SC",sans-serif' font-size="11" text-anchor="start" stroke="#000" stroke-width=".2">4</text><rect x="110.5" y="446.5" width="18" height="19" fill="#fff" stroke="#000"/><text x="129" y="459" font-family='"Liberation Sans","Noto Sans CJK SC",sans-serif' font-size="11" text-anchor="start" stroke="#000" stroke-width=".2">5</text><line x1="110" y1="476.5" x2="129" y2="476.5" stroke="#000" stroke-width="1"/><text x="129" y="479" font-family='"Liberation Sans","Noto Sans CJK SC",sans-serif' font-size="11" text-anchor="start" stroke="#000" stroke-width=".2">7</text><line x1="184" y1="436.5" x2="202" y2="436.5" stroke="#000" stroke-width="1"/><text x="202" y="439" font-family='"Liberation Sans","Noto Sans CJK SC",sans-serif' font-size="11" text-anchor="start" stroke="#000" stroke-width=".2">5</text><rect x="184.5" y="446.5" width="17" height="19" fill="#fff" stroke="#000"/><text x="202" y="459" font-family='"Liberation Sans","Noto Sans CJK SC",sans-serif' font-size="11" text-anchor="start" stroke="#000" stroke-width=".2">6</text><line x1="184" y1="476.5" x2="202" y2="476.5" stroke="#000" stroke-width="1"/><text x="202" y="479" font-family='"Liberation Sans","Noto Sans CJK SC",sans-serif' font-size="11" text-anchor="start" stroke="#000" stroke-width=".2">8</text><rect x="257.5" y="209.5" width="18" height="19" fill="#fff" stroke="#000"/><path d="M257.5 209.5L275.5 228.5M275.5 209.5L257.5 228.5" stroke="#000" stroke-width="1" fill="none" shape-rendering="auto"/><text x="276" y="222" font-family='"Liberation Sans","Noto Sans CJK SC",sans-serif' font-size="11" text-anchor="start" stroke="#000" stroke-width=".2">21</text><line x1="257" y1="258.5" x2="276" y2="258.5" stroke="#000" stroke-width="1"/><text x="276" y="261" font-family='"Liberation Sans","Noto Sans CJK SC",sans-serif' font-size="11" text-anchor="start" stroke="#000" stroke-width=".2">26</text><rect x="257.5" y="268.5" width="18" height="19" fill="#fff" stroke="#000"/><text x="276" y="281" font-family='"Liberation Sans","Noto Sans CJK SC",sans-serif' font-size="11" text-anchor="start" stroke="#000" stroke-width=".2">17</text><line x1="257" y1="298.5" x2="276" y2="298.5" stroke="#000" stroke-width="1"/><text x="276" y="300" font-family='"Liberation Sans","Noto Sans CJK SC",sans-serif' font-size="11" text-anchor="start" stroke="#000" stroke-width=".2">21</text><rect x="257.5" y="328.5" width="18" height="19" fill="#fff" stroke="#000"/><path d="M257.5 328.5L275.5 347.5M275.5 328.5L257.5 347.5" stroke="#000" stroke-width="1" fill="none" shape-rendering="auto"/><text x="276" y="341" font-family='"Liberation Sans","Noto Sans CJK SC",sans-serif' font-size="11" text-anchor="start" stroke="#000" stroke-width=".2">22</text><line x1="257" y1="357.5" x2="276" y2="357.5" stroke="#000" stroke-width="1"/><text x="276" y="360" font-family='"Liberation Sans","Noto Sans CJK SC",sans-serif' font-size="11" text-anchor="start" stroke="#000" stroke-width=".2">27</text><rect x="257.5" y="387.5" width="18" height="19" fill="#fff" stroke="#000"/><text x="276" y="400" font-family='"Liberation Sans","Noto Sans CJK SC",sans-serif' font-size="11" text-anchor="start" stroke="#000" stroke-width=".2">23</text><line x1="257" y1="417.5" x2="276" y2="417.5" stroke="#000" stroke-width="1"/><text x="276" y="419" font-family='"Liberation Sans","Noto Sans CJK SC",sans-serif' font-size="11" text-anchor="start" stroke="#000" stroke-width=".2">28</text><rect x="257.5" y="446.5" width="18" height="19" fill="#fff" stroke="#000"/><text x="276" y="459" font-family='"Liberation Sans","Noto Sans CJK SC",sans-serif' font-size="11" text-anchor="start" stroke="#000" stroke-width=".2">24</text><line x1="257" y1="476.5" x2="276" y2="476.5" stroke="#000" stroke-width="1"/><text x="276" y="479" font-family='"Liberation Sans","Noto Sans CJK SC",sans-serif' font-size="11" text-anchor="start" stroke="#000" stroke-width=".2">29</text><rect x="257.5" y="506.5" width="18" height="19" fill="#fff" stroke="#000"/><line x1="257" y1="515.5" x2="276" y2="515.5" stroke="#000" stroke-width="1"/><text x="276" y="519" font-family='"Liberation Sans","Noto Sans CJK SC",sans-serif' font-size="11" text-anchor="start" stroke="#000" stroke-width=".2">25</text><line x1="257" y1="535.5" x2="276" y2="535.5" stroke="#000" stroke-width="1"/><text x="276" y="538" font-family='"Liberation Sans","Noto Sans CJK SC",sans-serif' font-size="11" text-anchor="start" stroke="#000" stroke-width=".2">30</text><text x="294.5" y="519.3" font-family='"Liberation Serif","Noto Serif CJK SC",serif' font-size="12.5" font-weight="normal" fill="#000" textLength="11.0" lengthAdjust="spacingAndGlyphs" stroke="#000" stroke-width=".25">B3</text><rect x="257.5" y="565.5" width="18" height="19" fill="#fff" stroke="#000"/><text x="276" y="578" font-family='"Liberation Sans","Noto Sans CJK SC",sans-serif' font-size="11" text-anchor="start" stroke="#000" stroke-width=".2">27</text><line x1="257" y1="595.5" x2="276" y2="595.5" stroke="#000" stroke-width="1"/><text x="276" y="597" font-family='"Liberation Sans","Noto Sans CJK SC",sans-serif' font-size="11" text-anchor="start" stroke="#000" stroke-width=".2">31</text><rect x="257.5" y="625.5" width="18" height="19" fill="#fff" stroke="#000"/><text x="276" y="638" font-family='"Liberation Sans","Noto Sans CJK SC",sans-serif' font-size="11" text-anchor="start" stroke="#000" stroke-width=".2">28</text><line x1="257" y1="654.5" x2="276" y2="654.5" stroke="#000" stroke-width="1"/><text x="276" y="657" font-family='"Liberation Sans","Noto Sans CJK SC",sans-serif' font-size="11" text-anchor="start" stroke="#000" stroke-width=".2">42</text><rect x="257.5" y="684.5" width="18" height="19" fill="#fff" stroke="#000"/><path d="M257.5 684.5L275.5 703.5M275.5 684.5L257.5 703.5" stroke="#000" stroke-width="1" fill="none" shape-rendering="auto"/><text x="276" y="697" font-family='"Liberation Sans","Noto Sans CJK SC",sans-serif' font-size="11" text-anchor="start" stroke="#000" stroke-width=".2">33</text><line x1="331" y1="258.5" x2="350" y2="258.5" stroke="#000" stroke-width="1"/><text x="350" y="261" font-family='"Liberation Sans","Noto Sans CJK SC",sans-serif' font-size="11" text-anchor="start" stroke="#000" stroke-width=".2">32</text><rect x="331.5" y="268.5" width="18" height="19" fill="#fff" stroke="#000"/><text x="350" y="281" font-family='"Liberation Sans","Noto Sans CJK SC",sans-serif' font-size="11" text-anchor="start" stroke="#000" stroke-width=".2">29</text><line x1="331" y1="298.5" x2="350" y2="298.5" stroke="#000" stroke-width="1"/><text x="350" y="300" font-family='"Liberation Sans","Noto Sans CJK SC",sans-serif' font-size="11" text-anchor="start" stroke="#000" stroke-width=".2">33</text><line x1="340" y1="337.5" x2="349" y2="337.5" stroke="#000" stroke-width="1"/><path d="M344 333.5L349 337.5L344 341.5" stroke="#000" fill="none" shape-rendering="auto"/><rect x="347" y="336" width="3" height="3" fill="#000"/><text x="350" y="341" font-family='"Liberation Sans","Noto Sans CJK SC",sans-serif' font-size="11" text-anchor="start" stroke="#000" stroke-width=".2">39</text><rect x="333" y="566" width="71" height="18" fill="none" stroke="#14146e" stroke-width="2"/><rect x="330" y="564" width="21" height="23" fill="#fff"/><rect x="331.5" y="565.5" width="19" height="19" fill="none" stroke="#ffffd8"/><rect x="332.5" y="566.5" width="17" height="17" fill="none" stroke="#14146e"/><text x="350" y="578" font-family='"Liberation Sans","Noto Sans CJK SC",sans-serif' font-size="11" text-anchor="start" stroke="#000" stroke-width=".2">34</text><line x1="340.5" y1="555" x2="340.5" y2="565" stroke="#000" stroke-width="1"/><line x1="340.5" y1="586" x2="340.5" y2="740" stroke="#000" stroke-width="1"/><line x1="331" y1="595.5" x2="350" y2="595.5" stroke="#000" stroke-width="1"/><text x="350" y="597" font-family='"Liberation Sans","Noto Sans CJK SC",sans-serif' font-size="11" text-anchor="start" stroke="#000" stroke-width=".2">38</text><rect x="331.5" y="625.5" width="18" height="19" fill="#fff" stroke="#000"/><path d="M331.5 625.5L349.5 644.5M349.5 625.5L331.5 644.5" stroke="#000" stroke-width="1" fill="none" shape-rendering="auto"/><text x="350" y="638" font-family='"Liberation Sans","Noto Sans CJK SC",sans-serif' font-size="11" text-anchor="start" stroke="#000" stroke-width=".2">35</text><line x1="331" y1="654.5" x2="350" y2="654.5" stroke="#000" stroke-width="1"/><text x="350" y="657" font-family='"Liberation Sans","Noto Sans CJK SC",sans-serif' font-size="11" text-anchor="start" stroke="#000" stroke-width=".2">39</text><rect x="331.5" y="684.5" width="18" height="19" fill="#fff" stroke="#000"/><path d="M331.5 684.5L349.5 703.5M349.5 684.5L331.5 703.5" stroke="#000" stroke-width="1" fill="none" shape-rendering="auto"/><text x="350" y="697" font-family='"Liberation Sans","Noto Sans CJK SC",sans-serif' font-size="11" text-anchor="start" stroke="#000" stroke-width=".2">36</text><line x1="331" y1="713.5" x2="350" y2="713.5" stroke="#000" stroke-width="1"/><text x="350" y="716" font-family='"Liberation Sans","Noto Sans CJK SC",sans-serif' font-size="11" text-anchor="start" stroke="#000" stroke-width=".2">40</text><rect x="119" y="159" width="1" height="1" fill="#222"/><rect x="192" y="159" width="1" height="1" fill="#222"/><rect x="266" y="159" width="1" height="1" fill="#222"/><rect x="340" y="159" width="1" height="1" fill="#222"/><rect x="414" y="159" width="1" height="1" fill="#222"/><rect x="487" y="159" width="1" height="1" fill="#222"/><rect x="561" y="159" width="1" height="1" fill="#222"/><rect x="635" y="159" width="1" height="1" fill="#222"/><rect x="119" y="218" width="1" height="1" fill="#222"/><rect x="192" y="218" width="1" height="1" fill="#222"/><rect x="340" y="218" width="1" height="1" fill="#222"/><rect x="414" y="218" width="1" height="1" fill="#222"/><rect x="487" y="218" width="1" height="1" fill="#222"/><rect x="561" y="218" width="1" height="1" fill="#222"/><rect x="635" y="218" width="1" height="1" fill="#222"/><rect x="192" y="277" width="1" height="1" fill="#222"/><rect x="414" y="277" width="1" height="1" fill="#222"/><rect x="487" y="277" width="1" height="1" fill="#222"/><rect x="561" y="277" width="1" height="1" fill="#222"/><rect x="635" y="277" width="1" height="1" fill="#222"/><rect x="192" y="337" width="1" height="1" fill="#222"/><rect x="414" y="337" width="1" height="1" fill="#222"/><rect x="487" y="337" width="1" height="1" fill="#222"/><rect x="561" y="337" width="1" height="1" fill="#222"/><rect x="635" y="337" width="1" height="1" fill="#222"/><rect x="119" y="396" width="1" height="1" fill="#222"/><rect x="192" y="396" width="1" height="1" fill="#222"/><rect x="340" y="396" width="1" height="1" fill="#222"/><rect x="414" y="396" width="1" height="1" fill="#222"/><rect x="487" y="396" width="1" height="1" fill="#222"/><rect x="561" y="396" width="1" height="1" fill="#222"/><rect x="635" y="396" width="1" height="1" fill="#222"/><rect x="340" y="455" width="1" height="1" fill="#222"/><rect x="414" y="455" width="1" height="1" fill="#222"/><rect x="487" y="455" width="1" height="1" fill="#222"/><rect x="561" y="455" width="1" height="1" fill="#222"/><rect x="635" y="455" width="1" height="1" fill="#222"/><rect x="119" y="515" width="1" height="1" fill="#222"/><rect x="192" y="515" width="1" height="1" fill="#222"/><rect x="340" y="515" width="1" height="1" fill="#222"/><rect x="414" y="515" width="1" height="1" fill="#222"/><rect x="487" y="515" width="1" height="1" fill="#222"/><rect x="561" y="515" width="1" height="1" fill="#222"/><rect x="635" y="515" width="1" height="1" fill="#222"/><rect x="119" y="574" width="1" height="1" fill="#222"/><rect x="192" y="574" width="1" height="1" fill="#222"/><rect x="414" y="574" width="1" height="1" fill="#222"/><rect x="487" y="574" width="1" height="1" fill="#222"/><rect x="561" y="574" width="1" height="1" fill="#222"/><rect x="635" y="574" width="1" height="1" fill="#222"/><rect x="119" y="634" width="1" height="1" fill="#222"/><rect x="192" y="634" width="1" height="1" fill="#222"/><rect x="414" y="634" width="1" height="1" fill="#222"/><rect x="487" y="634" width="1" height="1" fill="#222"/><rect x="561" y="634" width="1" height="1" fill="#222"/><rect x="635" y="634" width="1" height="1" fill="#222"/><rect x="119" y="693" width="1" height="1" fill="#222"/><rect x="192" y="693" width="1" height="1" fill="#222"/><rect x="414" y="693" width="1" height="1" fill="#222"/><rect x="487" y="693" width="1" height="1" fill="#222"/><rect x="561" y="693" width="1" height="1" fill="#222"/><rect x="635" y="693" width="1" height="1" fill="#222"/></svg><div style="position:absolute;left:666px;top:112px;width:17px;height:619px;background:linear-gradient(to right,#f2f1ec,#fdfdfb)"></div><div style="position:absolute;left:667px;top:113px;width:14px;height:15px;background:linear-gradient(135deg,#cbd8fb,#b9c8f4);border-radius:2px;box-shadow:inset 0 0 0 1px #e2e9fd,0 1px 0 #aebde6, 1px 0 0 #d4defa"><svg width="14" height="15" style="position:absolute;left:0;top:0"><path d="M3.5 9.5L7 6l3.5 3.5" stroke="#4a5f8c" stroke-width="2.2" fill="none"/></svg></div><div style="position:absolute;left:667px;top:146px;width:14px;height:15px;background:#c3d1f7;border-radius:2px;box-shadow:0 1px 0 #aebde6, 1px 0 0 #d4defa"><svg width="14" height="15" style="position:absolute;left:0;top:0"><path d="M4 4.500h6M4 6.500h6M4 8.500h6M4 10.500h6" stroke="#e8eefc"/><path d="M4 5.500h6M4 7.500h6M4 9.500h6M4 11.500h6" stroke="#9fb3e8"/></svg></div><div style="position:absolute;left:667px;top:715px;width:14px;height:15px;background:linear-gradient(135deg,#cbd8fb,#b9c8f4);border-radius:2px;box-shadow:inset 0 0 0 1px #e2e9fd,0 1px 0 #aebde6, 1px 0 0 #d4defa"><svg width="14" height="15" style="position:absolute;left:0;top:0"><path d="M3.5 6L7 9.5 10.500 6" stroke="#4a5f8c" stroke-width="2.2" fill="none"/></svg></div><div style="position:absolute;left:666px;top:731px;width:17px;height:17px;background:#ECE9D8"></div><div style="position:absolute;left:2px;top:731px;width:664px;height:17px;background:linear-gradient(to bottom,#f2f1ec,#fdfdfb)"></div><div style="position:absolute;left:4px;top:732px;width:14px;height:15px;background:linear-gradient(135deg,#cbd8fb,#b9c8f4);border-radius:2px;box-shadow:inset 0 0 0 1px #e2e9fd,0 1px 0 #aebde6, 1px 0 0 #d4defa"><svg width="14" height="15" style="position:absolute;left:0;top:0"><path d="M8.5 4L5 7.500l3.500 3.500" stroke="#4a5f8c" stroke-width="2.2" fill="none"/></svg></div><div style="position:absolute;left:20px;top:732px;width:15px;height:15px;background:#c3d1f7;border-radius:2px;box-shadow:0 1px 0 #aebde6, 1px 0 0 #d4defa"><svg width="15" height="15" style="position:absolute;left:0;top:0"><path d="M4.500 4v6M6.500 4v6M8.500 4v6M10.500 4v6" stroke="#e8eefc"/><path d="M5.500 4v6M7.500 4v6M9.500 4v6M11.500 4v6" stroke="#9fb3e8"/></svg></div><div style="position:absolute;left:650px;top:732px;width:14px;height:15px;background:linear-gradient(135deg,#cbd8fb,#b9c8f4);border-radius:2px;box-shadow:inset 0 0 0 1px #e2e9fd,0 1px 0 #aebde6, 1px 0 0 #d4defa"><svg width="14" height="15" style="position:absolute;left:0;top:0"><path d="M5.500 4L9 7.500 5.500 11" stroke="#4a5f8c" stroke-width="2.2" fill="none"/></svg></div><div style="position:absolute;left:685px;top:110px;width:4px;height:639px;background:#ECE9D8"></div><div style="position:absolute;left:689px;top:111px;width:589px;height:638px;background:#000"></div><div style="position:absolute;left:690px;top:112px;width:588px;height:636px;background:#fff"></div><svg width="573" height="636" viewBox="690 112 573 636" style="position:absolute;left:690px;top:112px" shape-rendering="crispEdges"><line x1="770.5" y1="112" x2="770.5" y2="748" stroke="#000" stroke-width="1" /><line x1="1218.5" y1="112" x2="1218.5" y2="748" stroke="#000" stroke-width="1" /><rect x="1059" y="113" width="158" height="60" fill="none" stroke="#14147a" stroke-width="2"/><text x="759.5" y="147" font-family='"Liberation Serif","Noto Serif CJK SC",serif' font-size="16" font-weight="normal" fill="#000" textLength="7.0" lengthAdjust="spacingAndGlyphs" >4</text><line x1="771" y1="143.5" x2="800" y2="143.5" stroke="#000" stroke-width="1" /><line x1="800.5" y1="133" x2="800.5" y2="154" stroke="#000" stroke-width="1" /><line x1="812.5" y1="133" x2="812.5" y2="154" stroke="#000" stroke-width="1" /><line x1="794.5" y1="153.5" x2="818" y2="133.5" stroke="#000" stroke-width="1.1" shape-rendering="auto"/><text x="794.5" y="127" font-family='"Liberation Serif","Noto Serif CJK SC",serif' font-size="16" font-weight="normal" fill="#000" textLength="23.0" lengthAdjust="spacingAndGlyphs" >X14</text><line x1="813" y1="143.5" x2="1061" y2="143.5" stroke="#000" stroke-width="1" /><line x1="1061.5" y1="134" x2="1061.5" y2="153" stroke="#000" stroke-width="1" /><line x1="1061" y1="134.5" x2="1066" y2="134.5" stroke="#000" stroke-width="1" /><line x1="1061" y1="152.5" x2="1066" y2="152.5" stroke="#000" stroke-width="1" /><line x1="1215.5" y1="134" x2="1215.5" y2="153" stroke="#000" stroke-width="1" /><line x1="1211" y1="134.5" x2="1216" y2="134.5" stroke="#000" stroke-width="1" /><line x1="1211" y1="152.5" x2="1216" y2="152.5" stroke="#000" stroke-width="1" /><line x1="1215" y1="143.5" x2="1218" y2="143.5" stroke="#000" stroke-width="1" /><text x="1066.5" y="147" font-family='"Liberation Serif","Noto Serif CJK SC",serif' font-size="16" font-weight="normal" fill="#000" textLength="23.0" lengthAdjust="spacingAndGlyphs" >RST</text><text x="1138.5" y="147" font-family='"Liberation Serif","Noto Serif CJK SC",serif' font-size="16" font-weight="normal" fill="#000" textLength="23.0" lengthAdjust="spacingAndGlyphs" >Y73</text><text x="759.5" y="209" font-family='"Liberation Serif","Noto Serif CJK SC",serif' font-size="16" font-weight="normal" fill="#000" textLength="7.0" lengthAdjust="spacingAndGlyphs" >6</text><line x1="771" y1="205.5" x2="800" y2="205.5" stroke="#000" stroke-width="1" /><line x1="800.5" y1="195" x2="800.5" y2="216" stroke="#000" stroke-width="1" /><line x1="812.5" y1="195" x2="812.5" y2="216" stroke="#000" stroke-width="1" /><line x1="794.5" y1="215.5" x2="818" y2="195.5" stroke="#000" stroke-width="1.1" shape-rendering="auto"/><text x="794.5" y="189" font-family='"Liberation Serif","Noto Serif CJK SC",serif' font-size="16" font-weight="normal" fill="#000" textLength="23.0" lengthAdjust="spacingAndGlyphs" >X0F</text><line x1="813" y1="205.5" x2="1133" y2="205.5" stroke="#000" stroke-width="1" /><path d="M1137.5 196Q1128.5 205.5 1137.5 215" fill="none" stroke="#000" shape-rendering="auto"/><path d="M1212.5 196Q1221.5 205.5 1212.5 215" fill="none" stroke="#000" shape-rendering="auto"/><text x="1138.5" y="209" font-family='"Liberation Serif","Noto Serif CJK SC",serif' font-size="16" font-weight="normal" fill="#000" textLength="23.0" lengthAdjust="spacingAndGlyphs" >T31</text><text x="1166.5" y="188" font-family='"Liberation Serif","Noto Serif CJK SC",serif' font-size="16" font-weight="normal" fill="#000" textLength="15.0" lengthAdjust="spacingAndGlyphs" >K5</text><text x="751.5" y="271" font-family='"Liberation Serif","Noto Serif CJK SC",serif' font-size="16" font-weight="normal" fill="#000" textLength="15.0" lengthAdjust="spacingAndGlyphs" >11</text><line x1="771" y1="267.5" x2="800" y2="267.5" stroke="#000" stroke-width="1" /><line x1="800.5" y1="257" x2="800.5" y2="278" stroke="#000" stroke-width="1" /><line x1="812.5" y1="257" x2="812.5" y2="278" stroke="#000" stroke-width="1" /><text x="794.5" y="251" font-family='"Liberation Serif","Noto Serif CJK SC",serif' font-size="16" font-weight="normal" fill="#000" textLength="23.0" lengthAdjust="spacingAndGlyphs" >T31</text><line x1="813" y1="267.5" x2="872" y2="267.5" stroke="#000" stroke-width="1" /><line x1="872.5" y1="257" x2="872.5" y2="278" stroke="#000" stroke-width="1" /><line x1="884.5" y1="257" x2="884.5" y2="278" stroke="#000" stroke-width="1" /><text x="866.5" y="251" font-family='"Liberation Serif","Noto Serif CJK SC",serif' font-size="16" font-weight="normal" fill="#000" textLength="23.0" lengthAdjust="spacingAndGlyphs" >X12</text><line x1="885" y1="267.5" x2="944" y2="267.5" stroke="#000" stroke-width="1" /><line x1="944.5" y1="257" x2="944.5" y2="278" stroke="#000" stroke-width="1" /><line x1="956.5" y1="257" x2="956.5" y2="278" stroke="#000" stroke-width="1" /><text x="938.5" y="251" font-family='"Liberation Serif","Noto Serif CJK SC",serif' font-size="16" font-weight="normal" fill="#000" textLength="23.0" lengthAdjust="spacingAndGlyphs" >X13</text><line x1="957" y1="267.5" x2="1016" y2="267.5" stroke="#000" stroke-width="1" /><line x1="1016.5" y1="257" x2="1016.5" y2="278" stroke="#000" stroke-width="1" /><line x1="1028.5" y1="257" x2="1028.5" y2="278" stroke="#000" stroke-width="1" /><text x="1010.5" y="251" font-family='"Liberation Serif","Noto Serif CJK SC",serif' font-size="16" font-weight="normal" fill="#000" textLength="23.0" lengthAdjust="spacingAndGlyphs" >X14</text><line x1="1029" y1="267.5" x2="1133" y2="267.5" stroke="#000" stroke-width="1" /><path d="M1137.5 258Q1128.5 267.5 1137.5 277" fill="none" stroke="#000" shape-rendering="auto"/><path d="M1212.5 258Q1221.5 267.5 1212.5 277" fill="none" stroke="#000" shape-rendering="auto"/><text x="1138.5" y="271" font-family='"Liberation Serif","Noto Serif CJK SC",serif' font-size="16" font-weight="normal" fill="#000" textLength="31.0" lengthAdjust="spacingAndGlyphs" >M100</text><text x="751.5" y="333" font-family='"Liberation Serif","Noto Serif CJK SC",serif' font-size="16" font-weight="normal" fill="#000" textLength="15.0" lengthAdjust="spacingAndGlyphs" >16</text><line x1="771" y1="329.5" x2="800" y2="329.5" stroke="#000" stroke-width="1" /><line x1="800.5" y1="319" x2="800.5" y2="340" stroke="#000" stroke-width="1" /><line x1="812.5" y1="319" x2="812.5" y2="340" stroke="#000" stroke-width="1" /><text x="786.5" y="313" font-family='"Liberation Serif","Noto Serif CJK SC",serif' font-size="16" font-weight="normal" fill="#000" textLength="39.0" lengthAdjust="spacingAndGlyphs" >SM400</text><line x1="813" y1="329.5" x2="1133" y2="329.5" stroke="#000" stroke-width="1" /><path d="M1137.5 320Q1128.5 329.5 1137.5 339" fill="none" stroke="#000" shape-rendering="auto"/><path d="M1212.5 320Q1221.5 329.5 1212.5 339" fill="none" stroke="#000" shape-rendering="auto"/><text x="1138.5" y="333" font-family='"Liberation Serif","Noto Serif CJK SC",serif' font-size="16" font-weight="normal" fill="#000" textLength="23.0" lengthAdjust="spacingAndGlyphs" >T88</text><text x="1162.5" y="312" font-family='"Liberation Serif","Noto Serif CJK SC",serif' font-size="16" font-weight="normal" fill="#000" textLength="23.0" lengthAdjust="spacingAndGlyphs" >K40</text><text x="751.5" y="395" font-family='"Liberation Serif","Noto Serif CJK SC",serif' font-size="16" font-weight="normal" fill="#000" textLength="15.0" lengthAdjust="spacingAndGlyphs" >21</text><line x1="771" y1="391.5" x2="800" y2="391.5" stroke="#000" stroke-width="1" /><line x1="800.5" y1="381" x2="800.5" y2="402" stroke="#000" stroke-width="1" /><line x1="812.5" y1="381" x2="812.5" y2="402" stroke="#000" stroke-width="1" /><text x="794.5" y="375" font-family='"Liberation Serif","Noto Serif CJK SC",serif' font-size="16" font-weight="normal" fill="#000" textLength="23.0" lengthAdjust="spacingAndGlyphs" >T88</text><line x1="813" y1="391.5" x2="872" y2="391.5" stroke="#000" stroke-width="1" /><line x1="872.5" y1="381" x2="872.5" y2="402" stroke="#000" stroke-width="1" /><line x1="884.5" y1="381" x2="884.5" y2="402" stroke="#000" stroke-width="1" /><line x1="866.5" y1="401.5" x2="890" y2="381.5" stroke="#000" stroke-width="1.1" shape-rendering="auto"/><text x="866.5" y="375" font-family='"Liberation Serif","Noto Serif CJK SC",serif' font-size="16" font-weight="normal" fill="#000" textLength="23.0" lengthAdjust="spacingAndGlyphs" >X12</text><line x1="885" y1="391.5" x2="989" y2="391.5" stroke="#000" stroke-width="1" /><line x1="989.5" y1="382" x2="989.5" y2="401" stroke="#000" stroke-width="1" /><line x1="989" y1="382.5" x2="994" y2="382.5" stroke="#000" stroke-width="1" /><line x1="989" y1="400.5" x2="994" y2="400.5" stroke="#000" stroke-width="1" /><line x1="1215.5" y1="382" x2="1215.5" y2="401" stroke="#000" stroke-width="1" /><line x1="1211" y1="382.5" x2="1216" y2="382.5" stroke="#000" stroke-width="1" /><line x1="1211" y1="400.5" x2="1216" y2="400.5" stroke="#000" stroke-width="1" /><line x1="1215" y1="391.5" x2="1218" y2="391.5" stroke="#000" stroke-width="1" /><text x="994.5" y="395" font-family='"Liberation Serif","Noto Serif CJK SC",serif' font-size="16" font-weight="normal" fill="#000" textLength="23.0" lengthAdjust="spacingAndGlyphs" >MOV</text><text x="1058.5" y="395" font-family='"Liberation Serif","Noto Serif CJK SC",serif' font-size="16" font-weight="normal" fill="#000" textLength="23.0" lengthAdjust="spacingAndGlyphs" >K28</text><text x="1138.5" y="395" font-family='"Liberation Serif","Noto Serif CJK SC",serif' font-size="16" font-weight="normal" fill="#000" textLength="47.0" lengthAdjust="spacingAndGlyphs" >D10001</text><line x1="842.5" y1="391" x2="842.5" y2="516" stroke="#000" stroke-width="1" /><line x1="842" y1="453.5" x2="872" y2="453.5" stroke="#000" stroke-width="1" /><line x1="872.5" y1="443" x2="872.5" y2="464" stroke="#000" stroke-width="1" /><line x1="884.5" y1="443" x2="884.5" y2="464" stroke="#000" stroke-width="1" /><line x1="866.5" y1="463.5" x2="890" y2="443.5" stroke="#000" stroke-width="1.1" shape-rendering="auto"/><text x="866.5" y="437" font-family='"Liberation Serif","Noto Serif CJK SC",serif' font-size="16" font-weight="normal" fill="#000" textLength="23.0" lengthAdjust="spacingAndGlyphs" >X13</text><line x1="885" y1="453.5" x2="989" y2="453.5" stroke="#000" stroke-width="1" /><line x1="989.5" y1="444" x2="989.5" y2="463" stroke="#000" stroke-width="1" /><line x1="989" y1="444.5" x2="994" y2="444.5" stroke="#000" stroke-width="1" /><line x1="989" y1="462.5" x2="994" y2="462.5" stroke="#000" stroke-width="1" /><line x1="1215.5" y1="444" x2="1215.5" y2="463" stroke="#000" stroke-width="1" /><line x1="1211" y1="444.5" x2="1216" y2="444.5" stroke="#000" stroke-width="1" /><line x1="1211" y1="462.5" x2="1216" y2="462.5" stroke="#000" stroke-width="1" /><line x1="1215" y1="453.5" x2="1218" y2="453.5" stroke="#000" stroke-width="1" /><text x="994.5" y="457" font-family='"Liberation Serif","Noto Serif CJK SC",serif' font-size="16" font-weight="normal" fill="#000" textLength="23.0" lengthAdjust="spacingAndGlyphs" >MOV</text><text x="1058.5" y="457" font-family='"Liberation Serif","Noto Serif CJK SC",serif' font-size="16" font-weight="normal" fill="#000" textLength="23.0" lengthAdjust="spacingAndGlyphs" >K35</text><text x="1138.5" y="457" font-family='"Liberation Serif","Noto Serif CJK SC",serif' font-size="16" font-weight="normal" fill="#000" textLength="47.0" lengthAdjust="spacingAndGlyphs" >D10001</text><line x1="842" y1="515.5" x2="872" y2="515.5" stroke="#000" stroke-width="1" /><line x1="872.5" y1="505" x2="872.5" y2="526" stroke="#000" stroke-width="1" /><line x1="884.5" y1="505" x2="884.5" y2="526" stroke="#000" stroke-width="1" /><line x1="866.5" y1="525.5" x2="890" y2="505.5" stroke="#000" stroke-width="1.1" shape-rendering="auto"/><text x="866.5" y="499" font-family='"Liberation Serif","Noto Serif CJK SC",serif' font-size="16" font-weight="normal" fill="#000" textLength="23.0" lengthAdjust="spacingAndGlyphs" >X14</text><line x1="885" y1="515.5" x2="989" y2="515.5" stroke="#000" stroke-width="1" /><line x1="989.5" y1="506" x2="989.5" y2="525" stroke="#000" stroke-width="1" /><line x1="989" y1="506.5" x2="994" y2="506.5" stroke="#000" stroke-width="1" /><line x1="989" y1="524.5" x2="994" y2="524.5" stroke="#000" stroke-width="1" /><line x1="1215.5" y1="506" x2="1215.5" y2="525" stroke="#000" stroke-width="1" /><line x1="1211" y1="506.5" x2="1216" y2="506.5" stroke="#000" stroke-width="1" /><line x1="1211" y1="524.5" x2="1216" y2="524.5" stroke="#000" stroke-width="1" /><line x1="1215" y1="515.5" x2="1218" y2="515.5" stroke="#000" stroke-width="1" /><text x="994.5" y="519" font-family='"Liberation Serif","Noto Serif CJK SC",serif' font-size="16" font-weight="normal" fill="#000" textLength="23.0" lengthAdjust="spacingAndGlyphs" >MOV</text><text x="1058.5" y="519" font-family='"Liberation Serif","Noto Serif CJK SC",serif' font-size="16" font-weight="normal" fill="#000" textLength="23.0" lengthAdjust="spacingAndGlyphs" >K26</text><text x="1138.5" y="519" font-family='"Liberation Serif","Noto Serif CJK SC",serif' font-size="16" font-weight="normal" fill="#000" textLength="47.0" lengthAdjust="spacingAndGlyphs" >D10001</text><text x="751.5" y="581" font-family='"Liberation Serif","Noto Serif CJK SC",serif' font-size="16" font-weight="normal" fill="#000" textLength="15.0" lengthAdjust="spacingAndGlyphs" >34</text><line x1="771" y1="577.5" x2="800" y2="577.5" stroke="#000" stroke-width="1" /><line x1="800.5" y1="567" x2="800.5" y2="588" stroke="#000" stroke-width="1" /><line x1="812.5" y1="567" x2="812.5" y2="588" stroke="#000" stroke-width="1" /><text x="794.5" y="561" font-family='"Liberation Serif","Noto Serif CJK SC",serif' font-size="16" font-weight="normal" fill="#000" textLength="23.0" lengthAdjust="spacingAndGlyphs" >X12</text><line x1="813" y1="577.5" x2="872" y2="577.5" stroke="#000" stroke-width="1" /><line x1="872.5" y1="567" x2="872.5" y2="588" stroke="#000" stroke-width="1" /><line x1="884.5" y1="567" x2="884.5" y2="588" stroke="#000" stroke-width="1" /><text x="866.5" y="561" font-family='"Liberation Serif","Noto Serif CJK SC",serif' font-size="16" font-weight="normal" fill="#000" textLength="23.0" lengthAdjust="spacingAndGlyphs" >X13</text><line x1="885" y1="577.5" x2="944" y2="577.5" stroke="#000" stroke-width="1" /><line x1="944.5" y1="567" x2="944.5" y2="588" stroke="#000" stroke-width="1" /><line x1="956.5" y1="567" x2="956.5" y2="588" stroke="#000" stroke-width="1" /><text x="938.5" y="561" font-family='"Liberation Serif","Noto Serif CJK SC",serif' font-size="16" font-weight="normal" fill="#000" textLength="23.0" lengthAdjust="spacingAndGlyphs" >X14</text><line x1="957" y1="577.5" x2="989" y2="577.5" stroke="#000" stroke-width="1" /><line x1="989.5" y1="568" x2="989.5" y2="587" stroke="#000" stroke-width="1" /><line x1="989" y1="568.5" x2="994" y2="568.5" stroke="#000" stroke-width="1" /><line x1="989" y1="586.5" x2="994" y2="586.5" stroke="#000" stroke-width="1" /><line x1="1215.5" y1="568" x2="1215.5" y2="587" stroke="#000" stroke-width="1" /><line x1="1211" y1="568.5" x2="1216" y2="568.5" stroke="#000" stroke-width="1" /><line x1="1211" y1="586.5" x2="1216" y2="586.5" stroke="#000" stroke-width="1" /><line x1="1215" y1="577.5" x2="1218" y2="577.5" stroke="#000" stroke-width="1" /><text x="994.5" y="581" font-family='"Liberation Serif","Noto Serif CJK SC",serif' font-size="16" font-weight="normal" fill="#000" textLength="31.0" lengthAdjust="spacingAndGlyphs" >MOVP</text><text x="1058.5" y="581" font-family='"Liberation Serif","Noto Serif CJK SC",serif' font-size="16" font-weight="normal" fill="#000" textLength="15.0" lengthAdjust="spacingAndGlyphs" >K0</text><text x="1138.5" y="581" font-family='"Liberation Serif","Noto Serif CJK SC",serif' font-size="16" font-weight="normal" fill="#000" textLength="47.0" lengthAdjust="spacingAndGlyphs" >D10001</text><text x="751.5" y="643" font-family='"Liberation Serif","Noto Serif CJK SC",serif' font-size="16" font-weight="normal" fill="#000" textLength="15.0" lengthAdjust="spacingAndGlyphs" >39</text></svg><div style="position:absolute;left:1261px;top:112px;width:17px;height:636px;background:linear-gradient(to right,#f2f1ec,#fdfdfb)"></div><div style="position:absolute;left:1263px;top:113px;width:14px;height:15px;background:linear-gradient(135deg,#cbd8fb,#b9c8f4);border-radius:2px;box-shadow:inset 0 0 0 1px #e2e9fd,0 1px 0 #aebde6, 1px 0 0 #d4defa"><svg width="14" height="15" style="position:absolute;left:0;top:0"><path d="M3.5 9.5L7 6l3.5 3.5" stroke="#4a5f8c" stroke-width="2.2" fill="none"/></svg></div><div style="position:absolute;left:1263px;top:192px;width:14px;height:15px;background:#c3d1f7;border-radius:2px;box-shadow:0 1px 0 #aebde6, 1px 0 0 #d4defa"><svg width="14" height="15" style="position:absolute;left:0;top:0"><path d="M4 4.500h6M4 6.500h6M4 8.500h6M4 10.500h6" stroke="#e8eefc"/><path d="M4 5.500h6M4 7.500h6M4 9.500h6M4 11.500h6" stroke="#9fb3e8"/></svg></div><div style="position:absolute;left:1263px;top:732px;width:14px;height:15px;background:linear-gradient(135deg,#cbd8fb,#b9c8f4);border-radius:2px;box-shadow:inset 0 0 0 1px #e2e9fd,0 1px 0 #aebde6, 1px 0 0 #d4defa"><svg width="14" height="15" style="position:absolute;left:0;top:0"><path d="M3.5 6L7 9.5 10.500 6" stroke="#4a5f8c" stroke-width="2.2" fill="none"/></svg></div><div style="position:absolute;left:1278px;top:110px;width:1px;height:639px;background:#fff"></div><div style="position:absolute;left:0px;top:749px;width:1280px;height:21px;background:#ECE9D8"></div><div style="position:absolute;left:0px;top:748px;width:1280px;height:1px;background:#fff"></div><div style="position:absolute;left:0px;top:769px;width:1280px;height:1px;background:#fbfbff"></div><div style="position:absolute;left:661px;top:752px;width:86px;height:17px;box-sizing:border-box;border:1px solid;border-color:#aca899 #fff #fff #aca899"></div><div style="position:absolute;left:749px;top:752px;width:155px;height:17px;box-sizing:border-box;border:1px solid;border-color:#aca899 #fff #fff #aca899"></div><div style="position:absolute;left:920px;top:752px;width:95px;height:17px;box-sizing:border-box;border:1px solid;border-color:#aca899 #fff #fff #aca899"></div><div style="position:absolute;left:1018px;top:752px;width:75px;height:17px;box-sizing:border-box;border:1px solid;border-color:#aca899 #fff #fff #aca899"></div><div style="position:absolute;left:1096px;top:752px;width:55px;height:17px;box-sizing:border-box;border:1px solid;border-color:#aca899 #fff #fff #aca899"></div><div style="position:absolute;left:1154px;top:752px;width:41px;height:17px;box-sizing:border-box;border:1px solid;border-color:#aca899 #fff #fff #aca899"></div><div style="position:absolute;left:1198px;top:752px;width:23px;height:17px;box-sizing:border-box;border:1px solid;border-color:#aca899 #fff #fff #aca899"></div><div style="position:absolute;left:1224px;top:752px;width:23px;height:17px;box-sizing:border-box;border:1px solid;border-color:#aca899 #fff #fff #aca899"></div><div style="position:absolute;left:1250px;top:752px;width:31px;height:17px;box-sizing:border-box;border:1px solid;border-color:#aca899 #fff #fff #aca899"></div><svg width="1280" height="21" style="position:absolute;left:0px;top:749px" viewBox="0 749 1280 21"><text x="2.5" y="765" font-family='"Liberation Sans","Noto Sans CJK SC",sans-serif' font-size="12" font-weight="normal" fill="#000" textLength="47.0" lengthAdjust="spacingAndGlyphs" >准备完毕</text><text x="663.5" y="765" font-family='"Liberation Sans","Noto Sans CJK SC",sans-serif' font-size="11.5" font-weight="normal" fill="#000" textLength="35.0" lengthAdjust="spacingAndGlyphs" >Q02(H)</text><text x="751.5" y="765" font-family='"Liberation Sans","Noto Sans CJK SC",sans-serif' font-size="12" font-weight="normal" fill="#000" textLength="23.0" lengthAdjust="spacingAndGlyphs" >本站</text><text x="1098.5" y="765" font-family='"Liberation Sans","Noto Sans CJK SC",sans-serif' font-size="12" font-weight="normal" fill="#000" textLength="23.0" lengthAdjust="spacingAndGlyphs" >改写</text></svg><div style="position:absolute;left:0px;top:770px;width:1280px;height:30px;background:linear-gradient(to bottom,#2a5fba 0,#3f90ea 1.2px,#3f90ea 2.6px,#2a66da 4px,#2257d4 6px,#2258d6 14px,#2562de 22px,#2666e0 27px,#2058c8 28.5px,#1941a5 30px)"></div><div style="position:absolute;left:0px;top:770px;width:97px;height:30px;background:linear-gradient(to bottom,#3a8a3a 0%,#5fb85f 8%,#3f9d3f 20%,#388f38 60%,#2f7d2f 90%,#256a25 100%);border-radius:0 12px 12px 0 / 0 15px 15px 0;box-shadow:1px 0 2px #17357a"></div><svg width="20" height="22" viewBox="0 0 20 22" style="position:absolute;left:10px;top:774px" ><g transform="translate(2,1)"><path d="M2 4q3-2 6 0l-1.500 6q-3-2-6 0z" fill="#e8542c"/><path d="M9 4.500q3 2 6 0l-1.500 6q-3 2-6 0z" fill="#6cc24a"/><path d="M0 11.500q3-2 6 0l-1.500 6q-3-2-6 0z" fill="#3c7de0"/><path d="M7 12q3 2 6 0l-1.500 6q-3 2-6 0z" fill="#f4c430"/></g></svg><div style="position:absolute;left:36px;top:771px;font:italic 300 19px 'Liberation Sans','Noto Sans CJK SC',sans-serif;color:#fff;text-shadow:1px 1px 1px #1c4a1c;letter-spacing:0px;line-height:26px">开始</div><svg width="17" height="17" viewBox="0 0 17 17" style="position:absolute;left:108px;top:776px" ><rect x="1.500" y="2.500" width="12" height="12" rx="3" fill="#f4f8ff" stroke="#2a5ac0" stroke-width="1.400"/><path d="M5 6h5M5 8.500h3M5 11h5M5 6v5" stroke="#1a3a8a" stroke-width="1.300" fill="none"/><path d="M9 9l5-5 1.500 1.500-5 5z" fill="#e8a040" stroke="#604010" stroke-width=".5"/></svg><svg width="17" height="17" viewBox="0 0 17 17" style="position:absolute;left:132px;top:776px" ><defs><radialGradient id="hd" cx=".5" cy=".35" r=".7"><stop offset="0" stop-color="#fff0c8"/><stop offset=".6" stop-color="#f8b050"/><stop offset="1" stop-color="#d87018"/></radialGradient></defs><circle cx="8" cy="8.500" r="7.500" fill="url(#hd)"/><path d="M1.500 7.500h3.500v4.500h-3zM11.500 7.500h3.500l-.5 4.500h-3z" fill="#181010"/><path d="M5 13q3 2 6 0" stroke="#a04810" fill="none"/></svg><svg width="14" height="15" viewBox="0 0 14 15" style="position:absolute;left:155px;top:777px" ><path d="M10 1L3 7l4 1-4 5 8-6-4-1z" fill="#30c0f0"/><path d="M9 3l-4 4" stroke="#b0f0ff"/></svg><svg width="12" height="8" viewBox="0 0 12 8" style="position:absolute;left:181px;top:776px" ><path d="M1.500 1l3 2.800-3 2.800M6.500 1l3 2.800-3 2.800" stroke="#a8c8ff" stroke-width="1.400" fill="none"/></svg><div style="position:absolute;left:199px;top:774px;width:158px;height:24px;border-radius:3px;background:linear-gradient(to bottom,#5a96f5,#3d80ee 20%,#3a7ae8 80%,#3470dc);box-shadow:inset 1px 1px 0 #7fb0ff"></div><svg width="18" height="18" viewBox="0 0 18 18" style="position:absolute;left:207px;top:776px" ><defs><radialGradient id="ieg" cx=".4" cy=".3" r=".8"><stop offset="0" stop-color="#b8f068"/><stop offset=".6" stop-color="#48b820"/><stop offset="1" stop-color="#207808"/></radialGradient></defs><circle cx="9" cy="9" r="7.800" fill="url(#ieg)"/><path d="M4.500 9.500h9q0-4.500-4.500-4.500t-4.500 4.500q0 4.500 4.500 4.500q3 0 4-2" stroke="#fff" stroke-width="2" fill="none"/><path d="M2 12q6-9 14-8" stroke="#e8f040" stroke-width="1.200" fill="none"/></svg><div style="position:absolute;left:358px;top:774px;width:160px;height:24px;border-radius:3px;background:linear-gradient(to bottom,#1c4fb0,#2257c2 20%,#2459c6 80%,#2a60cf);box-shadow:inset 1px 1px 1px #143a8a"></div><svg width="18" height="18" viewBox="0 0 18 18" style="position:absolute;left:368px;top:777px" ><circle cx="8.500" cy="8.500" r="8" fill="#2a2322"/><path d="M1.500 5a8 8 0 0 0 2.500 10.500L6 9z" fill="#d01818"/><rect x="9" y="7" width="7" height="8" fill="#c9c4c0"/><path d="M10 8h4v3h-3v3h-1z" fill="#222"/></svg><svg width="700" height="30" style="position:absolute;left:0px;top:770px" viewBox="0 770 700 30"><text x="228.5" y="790" font-family='"Liberation Sans","Noto Sans CJK SC",sans-serif' font-size="12" font-weight="normal" fill="#fff" textLength="71.0" lengthAdjust="spacingAndGlyphs" >三菱工控论坛</text><text x="306.5" y="790" font-family='"Liberation Sans","Noto Sans CJK SC",sans-serif' font-size="12" font-weight="normal" fill="#fff" textLength="11.0" lengthAdjust="spacingAndGlyphs" >三</text><text x="318.5" y="790" font-family='"Liberation Mono","DejaVu Sans Mono",monospace' font-size="12" font-weight="normal" fill="#fff" textLength="17.0" lengthAdjust="spacingAndGlyphs" >...</text><text x="388.5" y="790" font-family='"Liberation Mono","DejaVu Sans Mono",monospace' font-size="12" font-weight="normal" fill="#fff" textLength="41.0" lengthAdjust="spacingAndGlyphs" >MELSOFT</text><text x="430.5" y="790" font-family='"Liberation Sans","Noto Sans CJK SC",sans-serif' font-size="12" font-weight="normal" fill="#fff" textLength="23.0" lengthAdjust="spacingAndGlyphs" >系列</text><text x="460.5" y="790" font-family='"Liberation Mono","DejaVu Sans Mono",monospace' font-size="12" font-weight="normal" fill="#fff" textLength="11.0" lengthAdjust="spacingAndGlyphs" >GX</text><text x="478.5" y="790" font-family='"Liberation Mono","DejaVu Sans Mono",monospace' font-size="12" font-weight="normal" fill="#fff" textLength="23.0" lengthAdjust="spacingAndGlyphs" >D...</text></svg><div style="position:absolute;left:1131px;top:770px;width:149px;height:30px;background:linear-gradient(to bottom,#1a8ee8 0%,#3ab0f8 6%,#1a96ea 14%,#1290e6 50%,#0f86da 90%,#0b6ab8 100%);border-left:1px solid #0a3a8a"></div><svg width="16" height="18" viewBox="0 0 16 18" style="position:absolute;left:1104px;top:776px" ><path d="M4 3q2-2 4 0t4 0" stroke="#dde" fill="none"/><rect x="1.500" y="4.500" width="13" height="10" rx="1" fill="#f4f4f4" stroke="#222"/><path d="M3.500 7.500h9M3.500 9.500h9M3.500 11.500h9" stroke="#111" stroke-width="1.400" stroke-dasharray="1.400 .8"/></svg><svg width="21" height="21" viewBox="0 0 21 21" style="position:absolute;left:1121px;top:775px" ><defs><radialGradient id="chv" cx=".35" cy=".3" r=".8"><stop offset="0" stop-color="#8ec6ff"/><stop offset=".6" stop-color="#3a82ee"/><stop offset="1" stop-color="#1c54c8"/></radialGradient></defs><circle cx="10.500" cy="10.300" r="8.600" fill="url(#chv)" stroke="#bcdcff" stroke-width=".8"/><path d="M12.500 6l-4.200 4.300 4.200 4.300" stroke="#fff" stroke-width="2.400" fill="none"/></svg><svg width="18" height="18" viewBox="0 0 18 18" style="position:absolute;left:1141px;top:776px" ><rect x="2.500" y="3.500" width="9" height="8" fill="#5a6478" stroke="#20242c"/><rect x="4" y="5" width="6" height="5" fill="#aab8d8"/><path d="M2 14.500h10l1-2h-10z" fill="#c8d0e0" stroke="#445"/><path d="M13 3q3 3.500 0 7M15 1.500q4 5 0 10" stroke="#cfe4ff" stroke-width="1.200" fill="none"/></svg><svg width="18" height="18" viewBox="0 0 18 18" style="position:absolute;left:1159px;top:776px" ><rect x="6.500" y="1.500" width="8" height="7" fill="#3c4a8a" stroke="#1c2240"/><rect x="1.500" y="5.500" width="8" height="7" fill="#7a8ac0" stroke="#1c2240"/><rect x="3" y="7" width="5" height="4" fill="#cfd8f0"/><path d="M2 14.500h8" stroke="#ccd" stroke-width="1.500"/><path d="M9.500 9.500l6 6M15.500 9.500l-6 6" stroke="#e82020" stroke-width="2.200"/></svg><svg width="18" height="18" viewBox="0 0 18 18" style="position:absolute;left:1178px;top:776px" ><path d="M3 2l8 7 1 5-5-2z" fill="#b8b8c4" stroke="#30343c"/><path d="M4 3l6 6" stroke="#f0f0f8" stroke-width="1.200"/><path d="M9 11l4 4M12 10l3 3" stroke="#3a6ad0" stroke-width="2"/><circle cx="12" cy="14" r="2" fill="#dfe8ff"/></svg><svg width="16" height="18" viewBox="0 0 16 18" style="position:absolute;left:1196px;top:776px" ><rect x="0" y="1" width="15" height="15" fill="#fff"/><path d="M1 1.500h4.500v6l4.500-6h5l-5.500 7.500 5.500 7h-5.500l-4-5.500v5.500h-4.500z" fill="#e01818"/><path d="M8 9l6.500 6.500v-4zM14.500 15.500h-4z" fill="#111"/><path d="M9 10l5 5" stroke="#111" stroke-width="2"/></svg><svg width="19" height="19" viewBox="0 0 19 19" style="position:absolute;left:1213px;top:775px" ><path d="M2 2q1 8 5 11l3-1q-5-3-6-10z" fill="#e8f8ff" stroke="#186898"/><path d="M15 2q0 8-5 11l-2-1q5-3 5-10z" fill="#48c8e8" stroke="#186898"/><path d="M7 13l3-1 2 1-2 3z" fill="#2a8a3a"/><path d="M10 15l4-2 3 3-4 2z" fill="#f0d820" stroke="#807010" stroke-width=".6"/></svg><div style="position:absolute;left:1236px;top:777px;font:11.5px 'Liberation Sans',sans-serif;color:#fff;letter-spacing:0.55px;line-height:14px">20:18</div></body></html>
